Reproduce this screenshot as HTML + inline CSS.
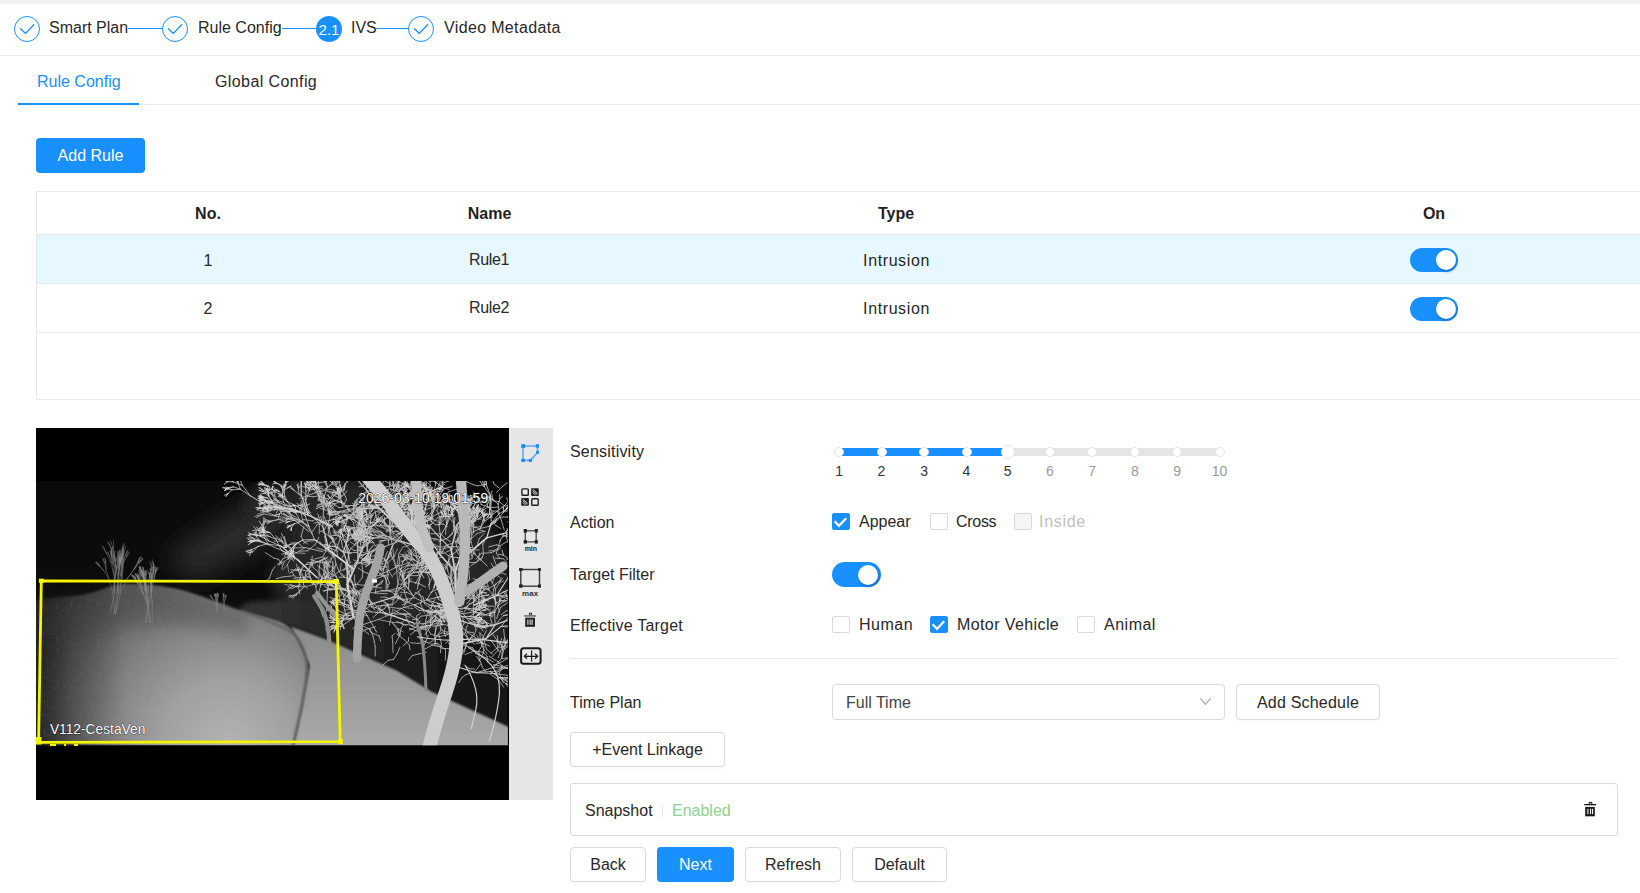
<!DOCTYPE html>
<html><head><meta charset="utf-8">
<style>
*{box-sizing:border-box;margin:0;padding:0}
html,body{width:1640px;height:893px;overflow:hidden;background:#fff;font-family:"Liberation Sans",sans-serif;font-size:16px;color:#333}
.a{position:absolute}
.t{position:absolute;line-height:18px;white-space:nowrap;font-size:16px;color:#282828}
.c{position:absolute;line-height:18px;white-space:nowrap;font-size:16px;color:#282828;transform:translateX(-50%)}
.sc{position:absolute;width:26px;height:26px;border:1px solid #1890ff;border-radius:50%}
.sl{position:absolute;height:1px;background:#1890ff;top:28px}
.btn{position:absolute;border:1px solid #d9d9d9;border-radius:4px;background:#fff;text-align:center;font-size:16px;color:#282828;box-shadow:0 2px 0 rgba(0,0,0,0.015)}
.sw{position:absolute;width:48px;height:24px;border-radius:12px;background:#1890ff}
.sw::after{content:"";position:absolute;right:2px;top:2px;width:20px;height:20px;border-radius:50%;background:#fff;box-shadow:1px 2px 3px rgba(0,40,90,0.3)}
.cb{position:absolute;width:18px;height:17px;border:1px solid #d9d9d9;border-radius:2px;background:#fff}
.cb.on{background:#1890ff;border-color:#1890ff}
.dot{position:absolute;width:10px;height:10px;border-radius:50%;background:#fff;border:1px solid #e4e4e4;top:447px}
.num{position:absolute;top:462px;line-height:18px;font-size:14px;transform:translateX(-50%)}
</style></head><body>
<!-- top bar -->
<div class="a" style="left:0;top:0;width:1640px;height:4px;background:#eef0f4"></div>

<!-- steps -->
<div class="sc" style="left:14px;top:16px"></div>
<div class="t" style="left:49px;top:19px">Smart Plan</div>
<div class="sl" style="left:128px;width:34px"></div>
<div class="sc" style="left:162px;top:16px"></div>
<div class="t" style="left:198px;top:19px">Rule Config</div>
<div class="sl" style="left:282px;width:34px"></div>
<div class="a" style="left:316px;top:16px;width:26px;height:26px;border-radius:50%;background:#1890ff;color:#fff;font-size:15px;line-height:28px;text-align:center">2.1</div>
<div class="t" style="left:351px;top:19px">IVS</div>
<div class="sl" style="left:376px;width:32px"></div>
<div class="sc" style="left:408px;top:16px"></div>
<div class="t" style="left:444px;top:19px;letter-spacing:0.35px">Video Metadata</div>

<div class="a" style="left:0;top:55px;width:1640px;height:1px;background:#e8e8e8"></div>

<!-- tabs -->
<div class="t" style="left:37px;top:73px;color:#1890ff">Rule Config</div>
<div class="t" style="left:215px;top:73px;letter-spacing:0.4px">Global Config</div>
<div class="a" style="left:18px;top:104px;width:1622px;height:1px;background:#e8e8e8"></div>
<div class="a" style="left:18px;top:103px;width:121px;height:2px;background:#1890ff"></div>

<!-- add rule -->
<div class="a" style="left:36px;top:138px;width:109px;height:35px;border-radius:4px;background:#1890ff;color:#fff;line-height:35px;text-align:center">Add Rule</div>

<!-- table -->
<div class="a" style="left:36px;top:191px;width:1610px;height:209px;border:1px solid #e8e8e8"></div>
<div class="a" style="left:37px;top:234px;width:1603px;height:50px;background:#e6f7ff;border-top:1px solid #e8e8e8;border-bottom:1px solid #e8e8e8"></div>
<div class="a" style="left:37px;top:332px;width:1603px;height:1px;background:#e8e8e8"></div>

<!-- table text -->
<div class="c" style="left:208px;top:205px;font-weight:bold;color:#1f1f1f">No.</div>
<div class="c" style="left:489.5px;top:205px;font-weight:bold;color:#1f1f1f">Name</div>
<div class="c" style="left:896px;top:205px;font-weight:bold;color:#1f1f1f">Type</div>
<div class="c" style="left:1434px;top:205px;font-weight:bold;color:#1f1f1f">On</div>
<div class="c" style="left:208px;top:252px">1</div>
<div class="c" style="left:489px;top:251px;letter-spacing:-0.4px">Rule1</div>
<div class="c" style="left:896.5px;top:252px;letter-spacing:0.6px">Intrusion</div>
<div class="sw" style="left:1410px;top:248px"></div>
<div class="c" style="left:208px;top:300px">2</div>
<div class="c" style="left:489px;top:299px;letter-spacing:-0.4px">Rule2</div>
<div class="c" style="left:896.5px;top:300px;letter-spacing:0.6px">Intrusion</div>
<div class="sw" style="left:1410px;top:297px"></div>

<!-- video -->
<div class="a" style="left:36px;top:428px;width:473px;height:372px;background:#000"></div>
<!--VIDEO--><svg class="a" style="left:36px;top:478px;width:474px;height:270px" viewBox="0 0 1568 893" preserveAspectRatio="none">
<defs>
<filter id="b8" filterUnits="userSpaceOnUse" x="-200" y="-200" width="2000" height="1300"><feGaussianBlur stdDeviation="8"/></filter>
<filter id="b20" filterUnits="userSpaceOnUse" x="-200" y="-200" width="2000" height="1300"><feGaussianBlur stdDeviation="22"/></filter>
<filter id="b40" filterUnits="userSpaceOnUse" x="-200" y="-200" width="2000" height="1300"><feGaussianBlur stdDeviation="40"/></filter>
<filter id="b3" filterUnits="userSpaceOnUse" x="-200" y="-200" width="2000" height="1300"><feGaussianBlur stdDeviation="3"/></filter>
<radialGradient id="ground" gradientUnits="userSpaceOnUse" cx="640" cy="893" r="760" fx="640" fy="893"><stop offset="0" stop-color="#b4b4b4"/><stop offset="0.3" stop-color="#a0a0a0"/><stop offset="0.55" stop-color="#828282"/><stop offset="0.72" stop-color="#686868"/><stop offset="0.9" stop-color="#4c4c4c"/><stop offset="1" stop-color="#3a3a3a"/></radialGradient>
<linearGradient id="gravel" gradientUnits="userSpaceOnUse" x1="0" y1="480" x2="0" y2="893"><stop offset="0" stop-color="#8a8a8a"/><stop offset="1" stop-color="#aaaaaa"/></linearGradient>
<linearGradient id="wallg" gradientUnits="userSpaceOnUse" x1="800" y1="0" x2="1568" y2="0"><stop offset="0" stop-color="#303030"/><stop offset="0.5" stop-color="#1e1e1e"/><stop offset="1" stop-color="#121212"/></linearGradient>
<linearGradient id="leftdark" x1="0" y1="0" x2="1" y2="0"><stop offset="0" stop-color="#101010" stop-opacity="0.7"/><stop offset="0.4" stop-color="#101010" stop-opacity="0.3"/><stop offset="1" stop-color="#101010" stop-opacity="0"/></linearGradient>
<filter id="noise" filterUnits="userSpaceOnUse" x="0" y="0" width="1568" height="893"><feTurbulence type="fractalNoise" baseFrequency="0.09" numOctaves="2" seed="4"/><feColorMatrix type="matrix" values="0 0 0 0 0.5  0 0 0 0 0.5  0 0 0 0 0.5  1.2 0 0 0 -0.6"/></filter>
<clipPath id="groundclip"><path d="M-20,407 Q77,392 124,390 Q170,387 220,368 Q269,350 300,350 Q331,350 386,355 Q440,360 479,370 Q518,381 570,399 Q622,417 648,428 Q674,438 734,454 Q794,469 818,480 Q842,491 861,526 Q880,560 892,590 Q905,620 892,690 L880,760 L850,893 L-20,893 Z"/></clipPath>
<clipPath id="vclip"><rect x="0" y="10" width="1561" height="874"/></clipPath>
</defs>
<g clip-path="url(#vclip)">
<rect x="0" y="0" width="1568" height="893" fill="#0b0b0b"/>
<path d="M430,260 Q600,130 860,10 L920,140 Q680,270 520,340 Z" fill="#2c2c2c" filter="url(#b40)"/>
<ellipse cx="760" cy="90" rx="70" ry="55" fill="#262626" filter="url(#b20)"/>
<path d="M840,0 Q1568,0 1568,350 Q1568,700 1484,670 Q1400,640 1300,605 Q1200,570 1100,535 Q1000,500 940,480 Q880,460 835,430 Q790,400 780,350 Q770,300 805,250 Q840,200 850,150 L860,100 Z" fill="#262626" filter="url(#b20)"/>
<path d="M660,440 L842,491 L971,538 L1193,637 L1311,708 L1568,825 L1568,560 L1300,500 L1050,430 L850,400 L700,410 Z" fill="url(#wallg)" filter="url(#b8)"/>
<path d="M-20,407 Q77,392 124,390 Q170,387 220,368 Q269,350 300,350 Q331,350 386,355 Q440,360 479,370 Q518,381 570,399 Q622,417 648,428 Q674,438 734,454 Q794,469 818,480 Q842,491 861,526 Q880,560 892,590 Q905,620 892,690 L880,760 L850,893 L-20,893 Z" fill="url(#ground)" filter="url(#b3)"/>
<rect x="0" y="300" width="300" height="600" fill="url(#leftdark)"/>
<path d="M-20,420 Q200,370 330,360 Q520,380 700,450 L700,520 Q450,470 250,500 Q100,520 -20,540 Z" fill="#3a3a3a" opacity="0.3" filter="url(#b20)"/>
<rect x="0" y="340" width="1568" height="560" filter="url(#noise)" clip-path="url(#groundclip)" opacity="0.22"/>
<path d="M842,491 L971,538 L1193,637 L1311,708 L1568,825 L1568,893 L850,893 L880,760 L905,620 L880,560 Z" fill="url(#gravel)" filter="url(#b3)"/>
<path d="M680,440 Q842,495 864,528 Q885,560 892,595 Q900,630 889,695 Q878,760 863,826 L848,893" fill="none" stroke="#5e5e5e" stroke-width="7" filter="url(#b3)"/>
<path d="M1050 460L1030 352M1390 420L1387 310" stroke="#d4d4d4" stroke-width="8.0" fill="none" stroke-linecap="round"/>
<path d="M1030 352L1065 272M1030 352L1030 283M1387 310L1373 235M1387 310L1336 253M1387 310L1414 232" stroke="#d4d4d4" stroke-width="5.5" fill="none" stroke-linecap="round"/>
<path d="M1065 272L1087 207M1065 272L1064 213M1030 283L1017 243M1030 283L1036 240M1373 235L1330 191M1373 235L1387 187M1373 235L1388 176M1336 253L1305 206M1336 253L1338 192M1414 232L1433 185M1414 232L1413 168M864 269L810 225M864 269L812 239M899 122L847 106M899 122L846 101M1524 389L1572 391M1524 389L1559 334M1524 389L1575 363M1488 532L1519 485M1488 532L1539 491" stroke="#d4d4d4" stroke-width="3.5" fill="none" stroke-linecap="round"/>
<path d="M1087 207L1078 159M1078 159L1078 128M1078 128L1073 110M1073 110L1071 96M1073 110L1060 103M1073 110L1065 98M1078 128L1077 108M1077 108L1088 96M1077 108L1068 97M1077 108L1085 96M1078 159L1061 124M1061 124L1036 108M1036 108L1013 112M1036 108L1024 91M1061 124L1071 94M1071 94L1087 86M1071 94L1088 85M1078 159L1054 139M1054 139L1032 132M1032 132L1020 125M1032 132L1022 121M1054 139L1035 127M1035 127L1023 122M1035 127L1019 120M1054 139L1033 133M1033 133L1019 126M1033 133L1019 139M1033 133L1019 123M1087 207L1088 166M1088 166L1095 137M1095 137L1094 119M1094 119L1085 109M1094 119L1085 109M1095 137L1103 117M1103 117L1105 104M1103 117L1113 106M1095 137L1094 119M1094 119L1088 107M1094 119L1091 108M1088 166L1080 136M1080 136L1079 112M1079 112L1088 98M1079 112L1066 97M1080 136L1071 116M1071 116L1059 103M1071 116L1066 102M1071 116L1059 109M1088 166L1074 137M1074 137L1058 126M1058 126L1048 118M1058 126L1047 115M1074 137L1077 115M1077 115L1079 99M1077 115L1090 105M1064 213L1094 182M1094 182L1106 151M1106 151L1108 132M1108 132L1107 118M1108 132L1116 121M1106 151L1125 139M1125 139L1143 135M1125 139L1141 131M1125 139L1144 139M1094 182L1114 160M1114 160L1129 144M1129 144L1138 135M1129 144L1133 127M1114 160L1126 146M1126 146L1140 143M1126 146L1130 133M1064 213L1078 176M1078 176L1069 148M1069 148L1076 127M1076 127L1072 111M1076 127L1081 110M1076 127L1086 113M1069 148L1081 127M1081 127L1095 121M1081 127L1093 119M1078 176L1081 146M1081 146L1071 127M1071 127L1064 113M1071 127L1066 110M1081 146L1101 131M1101 131L1114 123M1101 131L1114 124M1017 243L1028 211M1028 211L1036 191M1036 191L1052 185M1052 185L1060 178M1052 185L1065 185M1036 191L1033 174M1033 174L1037 165M1033 174L1031 162M1033 174L1028 163M1036 191L1032 178M1032 178L1024 173M1032 178L1030 166M1028 211L1047 198M1047 198L1064 199M1064 199L1074 190M1064 199L1075 198M1064 199L1076 200M1047 198L1053 180M1053 180L1047 166M1053 180L1048 167M1017 243L993 228M993 228L975 226M975 226L964 232M964 232L956 233M975 226L964 229M964 229L958 236M964 229L955 229M975 226L963 221M963 221L953 221M963 221L952 222M993 228L984 212M984 212L977 200M977 200L971 191M977 200L969 193M984 212L980 200M980 200L976 191M980 200L977 191M980 200L974 192M1017 243L1028 213M1028 213L1034 189M1034 189L1037 174M1037 174L1045 166M1037 174L1045 164M1037 174L1033 162M1034 189L1033 174M1033 174L1026 167M1033 174L1026 165M1028 213L1031 189M1031 189L1038 172M1038 172L1046 166M1038 172L1049 164M1038 172L1035 159M1031 189L1022 175M1022 175L1014 169M1022 175L1021 164M1036 240L1057 218M1057 218L1077 204M1077 204L1091 194M1091 194L1102 195M1091 194L1104 192M1077 204L1095 205M1095 205L1106 210M1095 205L1104 210M1077 204L1097 202M1097 202L1106 194M1097 202L1108 201M1057 218L1064 197M1064 197L1069 180M1069 180L1069 168M1069 180L1070 167M1064 197L1062 181M1062 181L1066 169M1062 181L1058 171M1064 197L1068 181M1068 181L1075 174M1068 181L1066 171M1036 240L1022 212M1022 212L1007 194M1007 194L992 190M992 190L984 182M992 190L980 190M1007 194L992 184M992 184L983 177M992 184L985 172M1007 194L1008 176M1008 176L1010 165M1008 176L1017 167M1022 212L1015 192M1015 192L1011 177M1011 177L1017 168M1011 177L1007 169M1011 177L1011 168M1015 192L1008 180M1008 180L1002 172M1008 180L999 176M1008 180L1005 170M1330 191L1300 160M1300 160L1278 147M1278 147L1264 135M1264 135L1255 124M1264 135L1250 130M1278 147L1263 132M1263 132L1263 116M1263 132L1250 129M1278 147L1260 143M1260 143L1248 142M1260 143L1248 144M1300 160L1272 157M1272 157L1259 145M1259 145L1256 131M1259 145L1253 135M1259 145L1247 138M1272 157L1255 149M1255 149L1240 149M1255 149L1242 149M1255 149L1250 137M1330 191L1305 161M1305 161L1282 149M1282 149L1263 154M1263 154L1252 148M1263 154L1256 164M1282 149L1266 135M1266 135L1264 122M1266 135L1250 130M1266 135L1255 123M1282 149L1264 140M1264 140L1249 143M1264 140L1254 129M1305 161L1283 149M1283 149L1270 137M1270 137L1257 136M1270 137L1264 124M1283 149L1263 147M1263 147L1251 155M1263 147L1250 140M1283 149L1267 152M1267 152L1255 157M1267 152L1256 146M1387 187L1382 149M1382 149L1378 123M1378 123L1374 106M1374 106L1371 93M1374 106L1375 94M1378 123L1377 103M1377 103L1371 91M1377 103L1382 93M1378 123L1367 105M1367 105L1353 101M1367 105L1354 98M1367 105L1364 90M1382 149L1364 128M1364 128L1347 121M1347 121L1338 114M1347 121L1338 111M1364 128L1364 107M1364 107L1371 94M1364 107L1359 91M1387 187L1404 159M1404 159L1424 144M1424 144L1437 133M1437 133L1445 122M1437 133L1446 123M1437 133L1446 122M1424 144L1440 144M1440 144L1449 152M1440 144L1453 143M1440 144L1452 141M1404 159L1418 137M1418 137L1414 119M1414 119L1416 108M1414 119L1417 108M1414 119L1413 106M1418 137L1424 119M1424 119L1435 107M1424 119L1430 105M1424 119L1424 105M1388 176L1402 137M1402 137L1394 106M1394 106L1399 87M1399 87L1404 75M1399 87L1406 75M1394 106L1401 87M1401 87L1412 75M1401 87L1399 75M1402 137L1418 110M1418 110L1427 87M1427 87L1427 68M1427 87L1432 73M1427 87L1430 71M1418 110L1414 85M1414 85L1416 69M1414 85L1411 67M1418 110L1442 102M1442 102L1462 97M1442 102L1451 87M1402 137L1414 107M1414 107L1422 87M1422 87L1436 77M1422 87L1436 79M1422 87L1432 74M1414 107L1428 88M1428 88L1435 71M1428 88L1434 74M1414 107L1419 86M1419 86L1431 74M1419 86L1432 78M1419 86L1413 73M1388 176L1413 140M1413 140L1410 107M1410 107L1423 84M1423 84L1431 65M1423 84L1432 66M1423 84L1431 67M1410 107L1397 88M1397 88L1384 74M1397 88L1398 70M1397 88L1379 83M1413 140L1434 109M1434 109L1431 83M1431 83L1439 69M1431 83L1437 68M1434 109L1437 85M1437 85L1431 70M1437 85L1449 72M1413 140L1442 118M1442 118L1463 110M1463 110L1471 99M1463 110L1473 101M1442 118L1457 103M1457 103L1463 89M1457 103L1463 88M1457 103L1470 95M1305 206L1271 180M1271 180L1253 161M1253 161L1233 157M1233 157L1220 156M1233 157L1218 163M1253 161L1244 142M1244 142L1242 129M1244 142L1240 126M1271 180L1251 151M1251 151L1256 126M1256 126L1270 114M1256 126L1250 108M1256 126L1257 109M1251 151L1232 135M1232 135L1230 115M1232 135L1217 132M1232 135L1222 122M1271 180L1236 177M1236 177L1213 188M1213 188L1196 182M1213 188L1199 197M1213 188L1206 204M1236 177L1219 162M1219 162L1217 146M1219 162L1202 161M1219 162L1215 149M1236 177L1208 181M1208 181L1189 175M1208 181L1191 187M1208 181L1192 195M1305 206L1300 167M1300 167L1293 142M1293 142L1279 131M1279 131L1274 120M1279 131L1277 118M1293 142L1275 131M1275 131L1265 124M1275 131L1259 133M1293 142L1282 125M1282 125L1282 109M1282 125L1270 115M1300 167L1284 147M1284 147L1266 144M1266 144L1253 148M1266 144L1254 150M1284 147L1276 131M1276 131L1275 118M1276 131L1275 119M1276 131L1277 119M1338 192L1333 155M1333 155L1339 132M1339 132L1343 117M1343 117L1343 108M1343 117L1349 110M1343 117L1339 106M1339 132L1351 119M1351 119L1362 118M1351 119L1354 109M1351 119L1353 107M1333 155L1347 129M1347 129L1352 109M1352 109L1358 96M1352 109L1355 95M1347 129L1368 121M1368 121L1382 125M1368 121L1383 120M1338 192L1359 154M1359 154L1371 124M1371 124L1380 104M1380 104L1396 96M1380 104L1389 88M1371 124L1383 100M1383 100L1400 90M1383 100L1398 92M1359 154L1354 120M1354 120L1349 99M1349 99L1349 83M1349 99L1343 86M1354 120L1342 98M1342 98L1339 80M1342 98L1328 90M1342 98L1336 80M1433 185L1433 152M1433 152L1435 132M1435 132L1432 115M1432 115L1439 106M1432 115L1435 104M1435 132L1429 120M1429 120L1430 110M1429 120L1431 112M1435 132L1439 119M1439 119L1437 110M1439 119L1440 108M1439 119L1444 108M1433 152L1449 133M1449 133L1451 117M1451 117L1445 107M1451 117L1459 111M1451 117L1445 108M1449 133L1452 114M1452 114L1448 99M1452 114L1446 100M1433 185L1469 167M1469 167L1484 143M1484 143L1503 130M1503 130L1512 116M1503 130L1506 114M1484 143L1479 123M1479 123L1475 108M1479 123L1471 112M1469 167L1478 143M1478 143L1484 126M1484 126L1481 116M1484 126L1496 120M1484 126L1493 116M1478 143L1494 129M1494 129L1503 116M1494 129L1500 117M1494 129L1509 130M1478 143L1482 124M1482 124L1487 108M1482 124L1492 116M1469 167L1498 160M1498 160L1519 148M1519 148L1532 133M1519 148L1525 134M1498 160L1514 148M1514 148L1524 135M1514 148L1523 138M1433 185L1443 149M1443 149L1465 134M1465 134L1481 125M1481 125L1492 120M1481 125L1495 120M1465 134L1477 122M1477 122L1481 112M1477 122L1490 120M1443 149L1458 126M1458 126L1455 106M1455 106L1445 96M1455 106L1448 95M1458 126L1460 104M1460 104L1464 88M1460 104L1458 89M1460 104L1464 91M1443 149L1460 130M1460 130L1461 113M1461 113L1466 100M1461 113L1463 100M1460 130L1465 113M1465 113L1473 103M1465 113L1470 100M1460 130L1474 117M1474 117L1477 103M1474 117L1482 104M1413 168L1424 130M1424 130L1430 102M1430 102L1438 80M1438 80L1441 67M1438 80L1440 65M1430 102L1432 80M1432 80L1443 66M1432 80L1423 69M1432 80L1440 69M1424 130L1410 102M1410 102L1393 86M1393 86L1379 82M1393 86L1377 83M1410 102L1392 84M1392 84L1379 75M1392 84L1375 83M1410 102L1387 94M1387 94L1373 88M1387 94L1372 87M1413 168L1404 125M1404 125L1388 102M1388 102L1377 86M1377 86L1368 73M1377 86L1365 79M1388 102L1367 97M1367 97L1352 95M1367 97L1355 89M1367 97L1358 87M1404 125L1386 95M1386 95L1367 74M1367 74L1367 57M1367 74L1367 52M1367 74L1358 58M1386 95L1379 75M1379 75L1378 61M1379 75L1374 59M1379 75L1368 69M1386 95L1370 79M1370 79L1353 75M1370 79L1355 70M1370 79L1367 62M1245 157L1241 102M1241 102L1230 71M1230 71L1221 50M1221 50L1212 40M1212 40L1212 30M1212 40L1203 37M1221 50L1224 36M1224 36L1225 27M1224 36L1219 27M1221 50L1219 36M1219 36L1211 28M1219 36L1217 27M1219 36L1218 26M1230 71L1237 49M1237 49L1249 40M1249 40L1259 40M1249 40L1258 36M1237 49L1250 42M1250 42L1260 42M1250 42L1258 34M1237 49L1250 43M1250 43L1258 38M1250 43L1260 36M1241 102L1258 71M1258 71L1275 50M1275 50L1272 33M1272 33L1273 22M1272 33L1278 22M1275 50L1292 41M1292 41L1300 28M1292 41L1306 42M1292 41L1297 31M1258 71L1282 56M1282 56L1299 51M1299 51L1306 40M1299 51L1312 54M1282 56L1303 47M1303 47L1318 42M1303 47L1317 41M1303 47L1312 31M1258 71L1269 49M1269 49L1282 41M1282 41L1285 31M1282 41L1286 32M1269 49L1269 34M1269 34L1269 25M1269 34L1264 26M1241 102L1216 68M1216 68L1198 38M1198 38L1182 16M1182 16L1180 -7M1182 16L1176 -0M1198 38L1200 12M1200 12L1210 -3M1200 12L1204 -6M1216 68L1199 47M1199 47L1183 40M1183 40L1171 34M1183 40L1172 39M1199 47L1184 34M1184 34L1181 19M1184 34L1179 20M1245 157L1199 124M1199 124L1168 95M1168 95L1138 89M1138 89L1119 98M1119 98L1109 111M1119 98L1106 98M1138 89L1119 94M1119 94L1110 107M1119 94L1105 102M1138 89L1115 90M1115 90L1100 89M1115 90L1100 96M1168 95L1155 72M1155 72L1156 51M1156 51L1162 37M1156 51L1168 40M1156 51L1163 39M1155 72L1156 55M1156 55L1160 44M1156 55L1157 43M1155 72L1144 59M1144 59L1144 48M1144 59L1131 53M1144 59L1138 48M1168 95L1144 74M1144 74L1137 50M1137 50L1125 39M1137 50L1137 33M1137 50L1123 37M1144 74L1132 53M1132 53L1118 44M1132 53L1120 40M1144 74L1130 61M1130 61L1115 57M1130 61L1119 56M1199 124L1161 113M1161 113L1133 100M1133 100L1113 93M1113 93L1099 93M1113 93L1104 81M1113 93L1099 92M1133 100L1120 82M1120 82L1119 66M1120 82L1118 65M1120 82L1118 64M1161 113L1146 85M1146 85L1136 64M1136 64L1132 50M1136 64L1135 48M1146 85L1141 61M1141 61L1135 45M1141 61L1132 48M1146 85L1127 76M1127 76L1113 69M1127 76L1119 64M1245 157L1242 109M1242 109L1220 88M1220 88L1219 64M1219 64L1222 49M1222 49L1229 39M1222 49L1225 40M1219 64L1222 48M1222 48L1218 38M1222 48L1228 38M1222 48L1217 39M1220 88L1201 79M1201 79L1191 71M1191 71L1185 62M1191 71L1186 64M1201 79L1192 66M1192 66L1189 58M1192 66L1189 57M1242 109L1257 78M1257 78L1272 57M1272 57L1289 51M1289 51L1295 39M1289 51L1304 52M1272 57L1286 53M1286 53L1296 49M1286 53L1295 49M1286 53L1296 57M1257 78L1265 52M1265 52L1281 44M1281 44L1291 43M1281 44L1294 41M1265 52L1271 35M1271 35L1273 24M1271 35L1283 29M1265 52L1259 33M1259 33L1254 20M1259 33L1263 18M1242 109L1247 80M1247 80L1255 63M1255 63L1255 51M1255 51L1258 42M1255 51L1253 43M1255 63L1261 52M1261 52L1267 46M1255 63L1261 52M1261 52L1266 43M1261 52L1267 44M1247 80L1259 65M1259 65L1261 50M1261 50L1269 42M1261 50L1265 41M1259 65L1263 51M1263 51L1259 41M1263 51L1259 40M1273 160L1305 132M1305 132L1319 100M1319 100L1335 82M1335 82L1345 71M1345 71L1356 68M1345 71L1354 63M1345 71L1351 64M1335 82L1348 71M1348 71L1352 59M1348 71L1359 70M1319 100L1311 74M1311 74L1304 59M1304 59L1298 47M1304 59L1302 49M1311 74L1321 56M1321 56L1334 48M1321 56L1329 45M1319 100L1332 83M1332 83L1347 77M1347 77L1356 74M1347 77L1356 74M1332 83L1336 70M1336 70L1336 60M1336 70L1339 62M1305 132L1317 102M1317 102L1315 78M1315 78L1325 64M1325 64L1334 60M1325 64L1325 51M1315 78L1318 64M1318 64L1328 58M1318 64L1315 52M1318 64L1323 54M1317 102L1310 76M1310 76L1307 58M1307 58L1304 43M1307 58L1306 46M1310 76L1306 58M1306 58L1308 44M1306 58L1300 46M1317 102L1319 81M1319 81L1312 70M1312 70L1311 61M1312 70L1309 62M1312 70L1311 61M1319 81L1313 67M1313 67L1310 57M1313 67L1315 56M1273 160L1288 106M1288 106L1268 72M1268 72L1244 49M1244 49L1233 30M1233 30L1234 17M1233 30L1221 18M1233 30L1219 20M1244 49L1230 30M1230 30L1229 13M1230 30L1217 23M1244 49L1238 29M1238 29L1241 12M1238 29L1226 21M1268 72L1245 62M1245 62L1229 62M1229 62L1218 58M1229 62L1217 66M1245 62L1231 65M1231 65L1221 72M1231 65L1224 71M1231 65L1221 63M1245 62L1229 56M1229 56L1220 48M1229 56L1218 52M1229 56L1220 48M1288 106L1292 73M1292 73L1305 55M1305 55L1304 40M1304 40L1308 30M1304 40L1301 28M1304 40L1296 33M1305 55L1320 53M1320 53L1331 56M1320 53L1331 56M1292 73L1295 51M1295 51L1292 34M1292 34L1289 22M1292 34L1282 25M1295 51L1289 37M1289 37L1284 28M1289 37L1286 28M1288 106L1295 68M1295 68L1291 44M1291 44L1286 27M1286 27L1281 16M1286 27L1291 17M1286 27L1285 13M1291 44L1283 27M1283 27L1281 15M1283 27L1279 14M1283 27L1274 17M1295 68L1314 49M1314 49L1334 44M1334 44L1346 43M1334 44L1342 35M1314 49L1334 38M1334 38L1349 39M1334 38L1346 28M1334 38L1346 25M1295 68L1310 42M1310 42L1329 35M1329 35L1341 29M1329 35L1345 28M1329 35L1343 35M1310 42L1327 36M1327 36L1342 34M1327 36L1340 29M1202 208L1153 190M1153 190L1114 189M1114 189L1089 181M1089 181L1070 190M1070 190L1060 203M1070 190L1056 184M1089 181L1074 175M1074 175L1062 178M1074 175L1063 174M1074 175L1062 170M1114 189L1092 172M1092 172L1073 168M1073 168L1058 172M1073 168L1060 160M1092 172L1077 158M1077 158L1065 147M1077 158L1065 153M1092 172L1085 153M1085 153L1083 139M1085 153L1076 143M1114 189L1086 178M1086 178L1068 182M1068 182L1054 185M1068 182L1059 189M1068 182L1055 187M1086 178L1072 166M1072 166L1065 155M1072 166L1059 166M1153 190L1115 200M1115 200L1085 196M1085 196L1061 193M1061 193L1046 193M1061 193L1049 182M1085 196L1071 181M1071 181L1056 176M1071 181L1060 174M1115 200L1086 192M1086 192L1068 201M1068 201L1054 205M1068 201L1056 206M1086 192L1063 186M1063 186L1046 190M1063 186L1050 174M1115 200L1098 219M1098 219L1080 231M1080 231L1066 232M1080 231L1071 242M1080 231L1068 228M1098 219L1096 238M1096 238L1103 248M1096 238L1090 250M1096 238L1104 249M1202 208L1157 226M1157 226L1134 252M1134 252L1127 274M1127 274L1121 290M1121 290L1114 303M1121 290L1118 302M1127 274L1123 289M1123 289L1120 301M1123 289L1125 299M1134 252L1128 277M1128 277L1133 295M1133 295L1134 309M1133 295L1129 309M1133 295L1143 307M1128 277L1137 296M1137 296L1151 305M1137 296L1142 307M1134 252L1121 276M1121 276L1115 296M1115 296L1105 308M1115 296L1105 307M1121 276L1103 284M1103 284L1089 280M1103 284L1091 293M1103 284L1090 293M1157 226L1124 233M1124 233L1102 248M1102 248L1091 264M1091 264L1076 272M1091 264L1078 272M1102 248L1096 267M1096 267L1099 280M1096 267L1084 274M1124 233L1102 247M1102 247L1091 259M1091 259L1085 269M1091 259L1082 268M1102 247L1093 265M1093 265L1096 278M1093 265L1091 280M1093 265L1088 278M1102 247L1082 255M1082 255L1068 258M1082 255L1067 248M1082 255L1075 266M1124 233L1108 252M1108 252L1102 268M1102 268L1099 282M1102 268L1101 279M1102 268L1104 280M1108 252L1105 267M1105 267L1105 277M1105 267L1098 273M1079 101L1048 120M1048 120L1031 136M1031 136L1026 150M1026 150L1021 159M1021 159L1020 168M1026 150L1022 160M1022 160L1019 168M1022 160L1015 164M1031 136L1021 146M1021 146L1012 148M1021 146L1016 153M1021 146L1012 149M1031 136L1016 140M1016 140L1005 144M1005 144L996 141M1005 144L995 145M1016 140L1006 146M1006 146L998 150M1048 120L1021 122M1021 122L1007 134M1007 134L996 145M996 145L995 155M996 145L984 145M996 145L990 151M1007 134L999 147M999 147L999 159M999 147L993 155M999 147L996 158M1021 122L1004 132M1004 132L998 145M998 145L996 155M998 145L998 153M998 145L992 153M1004 132L994 141M994 141L993 150M994 141L992 150M1004 132L989 137M989 137L980 138M989 137L979 139M1079 101L1036 103M1036 103L1011 80M1011 80L989 74M989 74L973 83M973 83L960 82M973 83L966 95M989 74L972 65M972 65L966 55M972 65L958 69M972 65L963 56M989 74L973 84M973 84L968 94M973 84L959 85M1011 80L1006 57M1006 57L1010 39M1010 39L1018 26M1010 39L1006 24M1010 39L1006 24M1006 57L1003 40M1003 40L999 29M1003 40L1006 31M1006 57L1000 43M1000 43L996 32M1000 43L994 35M1011 80L1001 60M1001 60L999 46M999 46L999 35M999 46L1002 36M1001 60L997 44M997 44L997 33M997 44L1000 32M1036 103L1008 110M1008 110L993 121M993 121L980 122M980 122L970 123M980 122L971 122M993 121L980 120M980 120L971 119M980 120L970 119M1008 110L990 112M990 112L974 113M974 113L964 117M974 113L964 109M990 112L979 109M979 109L972 104M979 109L974 102M979 109L970 112M990 112L978 115M978 115L969 118M978 115L968 117M1095 42L1058 3M1058 3L1020 -10M1020 -10L1005 -31M1005 -31L991 -39M991 -39L982 -43M991 -39L982 -46M991 -39L982 -37M1005 -31L993 -47M993 -47L980 -57M993 -47L978 -55M1005 -31L988 -41M988 -41L982 -51M988 -41L973 -41M988 -41L976 -44M1020 -10L999 -35M999 -35L975 -46M975 -46L968 -60M975 -46L956 -53M999 -35L983 -51M983 -51L968 -52M983 -51L976 -66M1058 3L1048 -28M1048 -28L1058 -52M1058 -52L1062 -68M1062 -68L1070 -77M1062 -68L1061 -78M1062 -68L1057 -78M1058 -52L1062 -73M1062 -73L1061 -90M1062 -73L1068 -87M1048 -28L1029 -38M1029 -38L1017 -51M1017 -51L1013 -62M1017 -51L1006 -58M1017 -51L1008 -62M1029 -38L1024 -50M1024 -50L1017 -58M1024 -50L1026 -59M1095 42L1066 7M1066 7L1037 -10M1037 -10L1013 -18M1013 -18L997 -18M997 -18L987 -23M997 -18L987 -26M997 -18L986 -19M1013 -18L1002 -32M1002 -32L994 -40M1002 -32L992 -38M1002 -32L1000 -45M1037 -10L1028 -33M1028 -33L1029 -51M1029 -51L1036 -61M1029 -51L1038 -63M1028 -33L1035 -50M1035 -50L1043 -59M1035 -50L1043 -62M1035 -50L1041 -62M1028 -33L1018 -45M1018 -45L1015 -55M1018 -45L1016 -56M1018 -45L1017 -57M1037 -10L1014 -4M1014 -4L1004 11M1004 11L1005 24M1004 11L993 20M1014 -4L1000 6M1000 6L996 15M1000 6L991 15M1066 7L1040 -18M1040 -18L1015 -21M1015 -21L998 -31M998 -31L986 -28M998 -31L985 -38M998 -31L987 -40M1015 -21L997 -30M997 -30L984 -29M997 -30L992 -43M1015 -21L1000 -12M1000 -12L993 -5M1000 -12L990 -3M1040 -18L1013 -18M1013 -18L998 -7M998 -7L987 -3M998 -7L992 2M1013 -18L998 -24M998 -24L987 -30M998 -24L987 -24M998 -24L988 -32M1040 -18L1030 -45M1030 -45L1024 -68M1024 -68L1026 -82M1024 -68L1012 -77M1030 -45L1019 -61M1019 -61L1021 -74M1019 -61L1018 -73M1030 -45L1023 -67M1023 -67L1020 -83M1023 -67L1020 -80M921 203L882 205M882 205L861 218M861 218L852 234M852 234L845 246M845 246L839 254M845 246L841 256M852 234L851 246M851 246L847 252M861 218L842 219M842 219L829 223M829 223L820 226M829 223L822 230M829 223L819 223M842 219L830 228M830 228L820 230M830 228L821 230M830 228L820 229M882 205L856 221M856 221L850 242M850 242L840 251M840 251L838 261M840 251L830 252M850 242L853 257M853 257L856 266M853 257L856 269M850 242L843 257M843 257L832 262M843 257L833 263M856 221L841 239M841 239L826 250M826 250L813 252M826 250L822 262M841 239L842 257M842 257L836 269M842 257L850 268M842 257L834 268M856 221L845 236M845 236L844 249M844 249L837 255M844 249L837 254M844 249L845 257M845 236L845 250M845 250L853 259M845 250L852 260M845 236L835 243M835 243L830 251M835 243L826 246M921 203L903 160M903 160L873 140M873 140L860 116M860 116L858 97M858 97L849 89M858 97L852 87M860 116L845 109M845 109L833 109M845 109L834 110M873 140L847 131M847 131L830 125M830 125L818 115M830 125L820 118M847 131L839 114M839 114L828 105M839 114L838 101M903 160L891 126M891 126L889 103M889 103L875 91M875 91L863 84M875 91L862 92M889 103L895 90M895 90L905 86M895 90L892 79M891 126L874 113M874 113L873 100M873 100L866 94M873 100L878 90M874 113L861 112M861 112L852 109M861 112L852 114M903 160L875 145M875 145L854 140M854 140L837 135M837 135L827 139M837 135L826 133M854 140L837 144M837 144L827 143M837 144L826 150M837 144L826 148M875 145L854 152M854 152L842 159M842 159L831 164M842 159L832 158M854 152L839 157M839 157L830 163M839 157L833 166M854 152L845 164M845 164L844 174M845 164L844 174M845 164L843 174M949 161L903 116M903 116L861 109M861 109L835 112M835 112L817 104M817 104L804 106M817 104L802 99M817 104L802 101M835 112L820 102M820 102L808 105M820 102L810 94M820 102L807 99M861 109L831 101M831 101L805 98M805 98L789 88M805 98L789 102M831 101L808 94M808 94L791 101M808 94L794 82M903 116L859 91M859 91L825 90M825 90L801 80M801 80L788 69M801 80L791 65M801 80L784 80M825 90L803 98M803 98L789 95M803 98L795 116M803 98L788 107M859 91L830 78M830 78L816 65M816 65L807 52M816 65L805 58M816 65L801 61M830 78L816 60M816 60L802 56M816 60L803 52M859 91L824 98M824 98L801 97M801 97L788 96M801 97L785 95M824 98L806 119M806 119L790 125M806 119L784 124M806 119L801 135M903 116L892 74M892 74L893 46M893 46L907 31M907 31L920 22M907 31L917 22M907 31L923 26M893 46L892 28M892 28L889 15M892 28L894 14M892 74L904 42M904 42L898 15M898 15L898 -5M898 15L889 -3M904 42L908 15M908 15L925 1M908 15L918 -4M904 42L928 30M928 30L947 29M928 30L949 37M892 74L870 54M870 54L868 34M868 34L863 22M868 34L878 22M868 34L867 19M870 54L854 41M854 41L843 28M854 41L841 33M949 161L951 104M951 104L972 77M972 77L994 75M994 75L1010 81M1010 81L1022 84M1010 81L1015 93M994 75L1005 66M1005 66L1008 57M1005 66L1007 56M1005 66L1012 57M972 77L987 57M987 57L1003 49M1003 49L1012 39M1003 49L1010 38M987 57L999 41M999 41L1006 32M999 41L1002 27M951 104L938 64M938 64L921 39M921 39L905 21M905 21L890 20M905 21L898 9M921 39L899 33M899 33L882 28M899 33L889 19M938 64L925 35M925 35L909 18M909 18L895 12M909 18L901 6M925 35L924 10M924 10L926 -10M924 10L920 -10M938 64L928 35M928 35L926 16M926 16L923 2M926 16L924 3M928 35L918 16M918 16L913 1M918 16L906 3M951 104L954 60M954 60L934 33M934 33L923 14M923 14L911 2M923 14L925 -3M923 14L910 9M934 33L934 5M934 5L945 -13M934 5L939 -12M954 60L964 30M964 30L954 10M954 10L948 -3M954 10L942 -2M954 10L954 -5M964 30L959 12M959 12L950 5M959 12L963 0M810 225L765 218M765 218L735 226M735 226L717 244M717 244L701 246M717 244L701 248M735 226L713 237M713 237L707 256M713 237L694 242M713 237L697 244M765 218L738 206M738 206L716 198M716 198L698 199M716 198L703 190M738 206L716 211M716 211L701 210M716 211L702 203M716 211L702 221M738 206L719 209M719 209L707 214M719 209L708 201M810 225L770 208M770 208L750 179M750 179L748 157M748 157L754 144M748 157L738 142M750 179L730 172M730 172L720 161M730 172L716 174M750 179L754 152M754 152L754 130M754 152L761 137M770 208L743 192M743 192L719 187M719 187L704 187M719 187L702 181M719 187L701 190M743 192L737 173M737 173L742 162M737 173L730 162M812 239L794 203M794 203L771 193M771 193L753 189M753 189L741 191M753 189L741 187M753 189L740 190M771 193L756 180M756 180L749 168M756 180L743 180M756 180L743 169M794 203L774 181M774 181L753 173M753 173L743 163M753 173L739 166M774 181L750 179M750 179L734 186M750 179L735 168M774 181L756 174M756 174L748 163M756 174L744 173M812 239L770 221M770 221L743 211M743 211L723 206M723 206L711 212M723 206L715 196M743 211L729 193M729 193L722 180M729 193L729 176M729 193L726 178M743 211L723 206M723 206L709 207M723 206L709 209M770 221L755 197M755 197L735 190M735 190L719 185M735 190L720 189M755 197L754 175M754 175L747 161M754 175L753 161M754 175L759 162M847 106L810 95M810 95L780 98M780 98L761 100M761 100L751 104M751 104L744 109M761 100L749 102M749 102L741 100M780 98L758 100M758 100L742 100M742 100L732 99M742 100L731 103M758 100L741 97M741 97L727 98M741 97L732 104M810 95L782 81M782 81L760 74M760 74L748 62M748 62L737 58M748 62L742 53M760 74L745 67M745 67L736 68M745 67L734 66M760 74L747 66M747 66L737 61M747 66L740 58M747 66L740 58M782 81L762 78M762 78L750 74M750 74L741 74M750 74L742 69M750 74L740 77M762 78L750 67M750 67L744 57M750 67L740 63M847 106L814 99M814 99L788 105M788 105L773 97M773 97L760 96M760 96L752 101M760 96L752 102M760 96L753 90M773 97L768 85M768 85L766 76M768 85L768 76M773 97L762 94M762 94L754 96M788 105L770 108M770 108L758 111M758 111L749 106M758 111L749 112M758 111L751 106M770 108L759 101M759 101L754 93M759 101L750 102M770 108L758 103M758 103L751 99M758 103L751 99M814 99L793 94M793 94L783 83M783 83L772 83M783 83L780 73M783 83L772 81M772 81L764 82M793 94L777 94M777 94L767 93M777 94L769 101M769 101L761 102M769 101L762 106M793 94L780 101M780 101L775 110M780 101L771 109M771 109L763 109M771 109L763 110M780 101L768 103M768 103L763 111M768 103L760 106M847 106L819 81M819 81L815 56M815 56L821 40M821 40L824 29M824 29L823 20M824 29L829 22M821 40L833 32M833 32L843 27M833 32L843 27M815 56L805 45M805 45L794 42M794 42L785 40M794 42L786 45M805 45L798 38M805 45L796 40M796 40L788 40M796 40L788 40M815 56L816 40M816 40L817 29M817 29L820 21M816 40L812 30M812 30L806 23M812 30L811 22M819 81L790 72M790 72L780 53M780 53L781 37M781 37L783 27M781 37L782 28M781 37L786 28M780 53L765 43M765 43L755 40M765 43L755 35M790 72L773 79M773 79L768 92M768 92L770 101M768 92L767 101M768 92L760 97M773 79L762 77M762 77L753 79M762 77L756 70M846 101L803 100M803 100L781 77M781 77L762 76M762 76L749 84M749 84L740 90M749 84L739 91M762 76L748 72M748 72L739 72M748 72L739 70M781 77L769 59M769 59L758 51M758 51L746 52M758 51L750 42M769 59L766 44M766 44L765 34M766 44L763 34M766 44L760 34M769 59L769 44M769 44L771 33M769 44L772 35M781 77L770 57M770 57L770 43M770 43L773 35M770 43L777 37M770 57L767 39M767 39L765 28M767 39L755 30M803 100L780 83M780 83L762 82M762 82L747 84M747 84L739 87M747 84L737 83M762 82L747 80M747 80L737 85M747 80L738 72M780 83L766 66M766 66L751 63M751 63L740 65M751 63L744 57M751 63L742 66M766 66L749 62M749 62L737 67M749 62L736 61M846 101L823 62M823 62L820 33M820 33L805 21M805 21L794 15M794 15L787 9M805 21L791 17M791 17L783 20M791 17L784 8M791 17L787 7M820 33L826 13M826 13L824 -0M824 -0L819 -7M824 -0L826 -9M826 13L836 3M836 3L840 -6M836 3L844 -0M826 13L821 -2M821 -2L812 -10M821 -2L815 -11M820 33L828 15M828 15L835 2M835 2L833 -9M835 2L838 -10M835 2L840 -9M828 15L839 8M839 8L848 4M839 8L847 5M823 62L791 46M791 46L766 50M766 50L750 45M750 45L737 41M750 45L740 40M766 50L750 40M750 40L737 32M750 40L741 31M791 46L770 28M770 28L752 21M752 21L743 14M752 21L745 9M770 28L750 23M750 23L739 15M750 23L736 17M750 23L734 22M770 28L752 19M752 19L738 23M752 19L737 23M752 19L741 8M1548 183L1584 175M1584 175L1610 180M1610 180L1628 175M1628 175L1635 161M1628 175L1637 165M1610 180L1630 178M1630 178L1643 184M1630 178L1643 176M1630 178L1641 184M1584 175L1606 161M1606 161L1618 149M1618 149L1627 138M1618 149L1628 143M1618 149L1621 135M1606 161L1618 145M1618 145L1634 138M1618 145L1622 130M1606 161L1622 158M1622 158L1634 155M1622 158L1634 160M1548 183L1594 193M1594 193L1621 204M1621 204L1641 202M1641 202L1653 210M1641 202L1651 211M1621 204L1640 202M1640 202L1652 192M1640 202L1652 204M1594 193L1616 212M1616 212L1622 228M1622 228L1633 235M1622 228L1630 237M1616 212L1634 220M1634 220L1647 228M1634 220L1647 226M1506 149L1533 130M1533 130L1546 114M1546 114L1547 102M1547 102L1542 95M1547 102L1545 94M1546 114L1556 104M1556 104L1562 96M1556 104L1565 97M1556 104L1562 98M1546 114L1555 105M1555 105L1560 99M1555 105L1558 97M1533 130L1559 129M1559 129L1574 127M1574 127L1582 119M1574 127L1585 126M1559 129L1577 119M1577 119L1588 107M1577 119L1588 107M1506 149L1532 118M1532 118L1557 104M1557 104L1570 89M1570 89L1571 75M1570 89L1585 82M1570 89L1575 76M1557 104L1564 82M1564 82L1557 65M1564 82L1574 71M1532 118L1529 87M1529 87L1511 70M1511 70L1495 62M1511 70L1508 54M1529 87L1535 68M1535 68L1533 55M1535 68L1544 60M1572 391L1601 382M1601 382L1614 363M1614 363L1618 348M1618 348L1622 338M1618 348L1613 338M1614 363L1623 351M1623 351L1621 341M1623 351L1629 344M1601 382L1620 389M1620 389L1633 391M1633 391L1643 390M1633 391L1640 387M1620 389L1633 385M1633 385L1643 384M1633 385L1642 379M1572 391L1605 398M1605 398L1631 405M1631 405L1646 409M1646 409L1654 418M1646 409L1658 407M1631 405L1647 401M1647 401L1660 404M1647 401L1657 395M1605 398L1626 416M1626 416L1636 431M1636 431L1645 441M1636 431L1644 442M1636 431L1644 439M1626 416L1642 429M1642 429L1654 432M1642 429L1650 439M1626 416L1642 421M1642 421L1653 419M1642 421L1649 432M1642 421L1653 422M1559 334L1572 296M1572 296L1565 269M1565 269L1546 255M1546 255L1542 239M1546 255L1530 252M1565 269L1571 250M1571 250L1570 237M1571 250L1578 235M1571 250L1567 234M1572 296L1594 274M1594 274L1603 254M1603 254L1598 241M1603 254L1603 240M1603 254L1603 238M1594 274L1605 256M1605 256L1601 241M1605 256L1614 242M1605 256L1611 243M1594 274L1608 254M1608 254L1617 243M1608 254L1620 239M1559 334L1592 304M1592 304L1622 287M1622 287L1649 286M1649 286L1665 293M1649 286L1665 286M1622 287L1649 279M1649 279L1666 264M1649 279L1667 266M1622 287L1645 272M1645 272L1667 276M1645 272L1659 262M1592 304L1611 284M1611 284L1632 279M1632 279L1646 279M1632 279L1642 268M1611 284L1630 277M1630 277L1639 269M1630 277L1644 280M1575 363L1615 342M1615 342L1650 336M1650 336L1671 348M1671 348L1689 349M1671 348L1683 364M1650 336L1676 327M1676 327L1690 312M1676 327L1696 330M1676 327L1693 318M1650 336L1674 335M1674 335L1688 337M1674 335L1687 327M1674 335L1687 326M1615 342L1643 350M1643 350L1660 356M1660 356L1672 352M1660 356L1667 367M1643 350L1658 367M1658 367L1672 377M1658 367L1671 377M1643 350L1659 368M1659 368L1658 387M1659 368L1677 372M1575 363L1619 374M1619 374L1638 395M1638 395L1640 416M1640 416L1652 426M1640 416L1648 431M1640 416L1643 434M1638 395L1650 410M1650 410L1658 422M1650 410L1649 422M1650 410L1664 413M1619 374L1646 390M1646 390L1661 403M1661 403L1671 411M1661 403L1671 414M1646 390L1669 392M1669 392L1685 384M1669 392L1681 405M1575 363L1620 358M1620 358L1648 337M1648 337L1671 329M1671 329L1689 337M1671 329L1685 324M1648 337L1671 338M1671 338L1687 333M1671 338L1683 350M1620 358L1654 345M1654 345L1683 343M1683 343L1700 351M1683 343L1697 333M1683 343L1702 336M1654 345L1673 334M1673 334L1687 324M1673 334L1683 325M1620 358L1646 335M1646 335L1664 314M1664 314L1679 300M1664 314L1671 296M1646 335L1664 322M1664 322L1683 320M1664 322L1678 311M1519 485L1547 455M1547 455L1571 449M1571 449L1582 436M1582 436L1584 425M1582 436L1591 426M1571 449L1590 454M1590 454L1598 467M1590 454L1603 449M1590 454L1603 452M1547 455L1573 452M1573 452L1587 441M1587 441L1599 439M1587 441L1598 439M1573 452L1591 451M1591 451L1603 460M1591 451L1606 451M1573 452L1588 463M1588 463L1597 469M1588 463L1590 474M1588 463L1601 470M1519 485L1517 444M1517 444L1520 418M1520 418L1518 402M1518 402L1512 392M1518 402L1511 395M1520 418L1534 405M1534 405L1543 394M1534 405L1545 405M1520 418L1519 399M1519 399L1511 387M1519 399L1514 387M1519 399L1511 389M1517 444L1529 423M1529 423L1543 411M1543 411L1555 407M1543 411L1551 401M1529 423L1534 408M1534 408L1535 395M1534 408L1532 398M1539 491L1591 485M1591 485L1624 479M1624 479L1641 491M1641 491L1657 493M1641 491L1651 503M1624 479L1651 485M1651 485L1667 495M1651 485L1672 486M1651 485L1664 495M1624 479L1641 460M1641 460L1661 457M1641 460L1652 449M1591 485L1616 459M1616 459L1630 436M1630 436L1648 431M1630 436L1641 418M1616 459L1640 453M1640 453L1659 457M1640 453L1657 447M1616 459L1629 438M1629 438L1631 418M1629 438L1641 425M1629 438L1642 423M1539 491L1593 495M1593 495L1629 497M1629 497L1650 495M1650 495L1664 485M1650 495L1663 500M1629 497L1657 493M1657 493L1669 478M1657 493L1677 498M1629 497L1656 502M1656 502L1675 508M1656 502L1676 507M1593 495L1627 490M1627 490L1650 488M1650 488L1665 489M1650 488L1666 480M1627 490L1647 472M1647 472L1665 464M1647 472L1659 463M1593 495L1628 512M1628 512L1657 509M1657 509L1676 506M1657 509L1670 498M1657 509L1675 501M1628 512L1642 536M1642 536L1656 548M1642 536L1656 553M1539 491L1571 449M1571 449L1600 420M1600 420L1621 398M1621 398L1628 377M1621 398L1638 392M1600 420L1616 400M1616 400L1620 380M1616 400L1634 394M1571 449L1567 414M1567 414L1570 385M1570 385L1567 367M1570 385L1565 367M1567 414L1556 390M1556 390L1545 375M1556 390L1554 374M1456 644L1504 640M1504 640L1535 661M1535 661L1560 674M1560 674L1574 690M1574 690L1579 707M1574 690L1586 697M1574 690L1586 700M1560 674L1575 689M1575 689L1584 699M1575 689L1584 702M1535 661L1561 661M1561 661L1574 651M1574 651L1579 641M1574 651L1581 644M1574 651L1586 647M1561 661L1580 655M1580 655L1590 646M1580 655L1592 651M1535 661L1554 680M1554 680L1576 686M1576 686L1589 679M1576 686L1592 690M1554 680L1565 695M1565 695L1570 707M1565 695L1577 698M1554 680L1574 688M1574 688L1590 688M1574 688L1589 696M1504 640L1532 660M1532 660L1553 666M1553 666L1567 662M1567 662L1577 662M1567 662L1574 657M1553 666L1566 677M1566 677L1573 687M1566 677L1576 684M1532 660L1559 660M1559 660L1576 664M1576 664L1586 673M1576 664L1583 675M1576 664L1588 661M1559 660L1579 650M1579 650L1587 636M1579 650L1592 645M1456 644L1513 627M1513 627L1561 629M1561 629L1592 612M1592 612L1601 591M1601 591L1603 577M1601 591L1600 576M1592 612L1616 598M1616 598L1631 590M1616 598L1630 587M1561 629L1592 625M1592 625L1618 622M1618 622L1635 615M1618 622L1629 607M1618 622L1633 627M1592 625L1608 607M1608 607L1622 600M1608 607L1622 596M1561 629L1591 630M1591 630L1611 619M1611 619L1628 616M1611 619L1626 621M1591 630L1612 635M1612 635L1625 627M1612 635L1626 634M1612 635L1622 645M1513 627L1540 597M1540 597L1572 593M1572 593L1596 587M1596 587L1616 591M1596 587L1617 589M1596 587L1613 583M1572 593L1596 598M1596 598L1614 599M1596 598L1614 604M1572 593L1590 607M1590 607L1605 619M1590 607L1599 620M1540 597L1548 566M1548 566L1570 552M1570 552L1587 550M1570 552L1575 532M1548 566L1554 547M1554 547L1565 539M1554 547L1548 536M1554 547L1559 536M1540 597L1543 568M1543 568L1538 548M1538 548L1526 538M1538 548L1528 540M1543 568L1552 548M1552 548L1564 538M1552 548L1562 534M1552 548L1552 530M1456 644L1518 647M1518 647L1562 653M1562 653L1595 656M1595 656L1619 646M1619 646L1633 635M1619 646L1641 647M1595 656L1618 656M1618 656L1636 662M1618 656L1635 650M1562 653L1587 639M1587 639L1610 634M1610 634L1623 642M1610 634L1623 626M1610 634L1624 642M1587 639L1605 641M1605 641L1615 646M1605 641L1613 649M1518 647L1550 628M1550 628L1580 632M1580 632L1597 648M1597 648L1612 649M1597 648L1612 657M1597 648L1610 653M1580 632L1596 647M1596 647L1603 663M1596 647L1602 660M1550 628L1578 624M1578 624L1601 624M1601 624L1616 630M1601 624L1617 620M1578 624L1596 630M1596 630L1608 630M1596 630L1604 643M1596 630L1608 636M1578 624L1594 607M1594 607L1608 606M1594 607L1608 607M1594 607L1612 603M1156 447L1093 396M1093 396L1040 376M1040 376L1006 360M1006 360L981 347M981 347L973 329M981 347L960 349M981 347L969 333M1006 360L985 349M985 349L980 336M985 349L968 344M1040 376L1002 367M1002 367L973 370M973 370L954 358M973 370L950 373M1002 367L980 355M980 355L963 354M980 355L964 352M980 355L974 339M1002 367L979 354M979 354L962 345M979 354L965 344M1093 396L1053 365M1053 365L1040 330M1040 330L1027 303M1027 303L1025 280M1027 303L1024 283M1040 330L1045 307M1045 307L1043 289M1045 307L1046 288M1053 365L1041 337M1041 337L1020 328M1020 328L1008 319M1020 328L1002 328M1041 337L1036 313M1036 313L1040 294M1036 313L1030 299M1036 313L1047 297M1156 447L1088 441M1088 441L1037 455M1037 455L1009 474M1009 474L990 487M990 487L977 494M990 487L976 498M1009 474L988 478M988 478L979 490M988 478L974 478M988 478L971 477M1009 474L991 492M991 492L975 503M991 492L985 510M1037 455L1001 439M1001 439L987 419M987 419L975 409M987 419L977 407M987 419L975 408M1001 439L986 420M986 420L971 409M986 420L981 403M1037 455L1001 452M1001 452L979 442M979 442L966 433M979 442L967 427M979 442L968 426M1001 452L982 437M982 437L973 422M982 437L964 437M982 437L966 426M1088 441L1045 466M1045 466L1012 471M1012 471L993 489M993 489L986 509M993 489L988 505M993 489L987 505M1012 471L987 469M987 469L970 461M987 469L968 472M987 469L973 457M1045 466L1014 463M1014 463L988 466M988 466L972 454M988 466L976 478M988 466L972 454M1014 463L994 468M994 468L982 475M994 468L983 473M994 468L983 465M1014 463L994 450M994 450L984 435M994 450L978 447M1045 466L1011 490M1011 490L986 495M986 495L970 505M986 495L971 504M1011 490L979 489M979 489L957 501M979 489L960 507M1088 441L1046 437M1046 437L1018 457M1018 457L1012 482M1012 482L1020 496M1012 482L1019 497M1012 482L1018 499M1018 457L1010 480M1010 480L1007 500M1010 480L993 489M1010 480L993 489M1046 437L1021 416M1021 416L998 404M998 404L979 407M998 404L981 405M998 404L992 388M1021 416L996 410M996 410L984 398M996 410L979 413M1021 416L1018 392M1018 392L1012 376M1018 392L1026 379M1046 437L1018 422M1018 422L1003 405M1003 405L1004 387M1003 405L991 398M1018 422L997 416M997 416L984 409M997 416L982 410M997 416L983 410M1186 393L1219 337M1219 337L1251 312M1251 312L1278 310M1278 310L1288 297M1288 297L1293 286M1288 297L1290 286M1278 310L1290 299M1290 299L1303 298M1290 299L1297 289M1251 312L1278 310M1278 310L1298 314M1298 314L1310 327M1298 314L1311 308M1298 314L1307 324M1278 310L1295 312M1295 312L1306 305M1295 312L1306 311M1219 337L1245 306M1245 306L1267 290M1267 290L1286 283M1286 283L1299 282M1286 283L1299 276M1267 290L1276 276M1276 276L1276 265M1276 276L1279 265M1276 276L1288 272M1267 290L1278 278M1278 278L1290 274M1278 278L1289 273M1245 306L1262 280M1262 280L1279 263M1279 263L1290 247M1279 263L1282 246M1262 280L1284 276M1284 276L1294 265M1284 276L1297 271M1219 337L1258 301M1258 301L1298 291M1298 291L1320 270M1320 270L1329 253M1320 270L1342 261M1298 291L1326 286M1326 286L1348 285M1326 286L1341 293M1258 301L1267 265M1267 265L1292 249M1292 249L1307 235M1292 249L1314 241M1292 249L1309 252M1267 265L1285 242M1285 242L1300 232M1285 242L1300 230M1186 393L1252 420M1252 420L1293 403M1293 403L1326 395M1326 395L1352 386M1352 386L1372 386M1352 386L1369 377M1352 386L1369 382M1326 395L1351 397M1351 397L1366 392M1351 397L1362 388M1293 403L1328 414M1328 414L1353 423M1353 423L1363 435M1353 423L1364 437M1353 423L1368 419M1328 414L1340 436M1340 436L1355 440M1340 436L1355 445M1340 436L1336 452M1328 414L1355 422M1355 422L1371 429M1355 422L1375 425M1355 422L1377 422M1293 403L1307 379M1307 379L1325 368M1325 368L1338 367M1325 368L1338 364M1325 368L1340 365M1307 379L1317 363M1317 363L1319 348M1317 363L1318 351M1317 363L1322 351M1252 420L1298 445M1298 445L1329 443M1329 443L1348 459M1348 459L1361 473M1348 459L1363 467M1348 459L1351 478M1329 443L1351 450M1351 450L1367 454M1351 450L1365 445M1351 450L1365 458M1298 445L1331 446M1331 446L1354 442M1354 442L1371 442M1354 442L1372 434M1331 446L1352 455M1352 455L1357 467M1352 455L1368 460M1352 455L1366 451M1252 420L1291 440M1291 440L1319 443M1319 443L1338 436M1338 436L1353 436M1338 436L1348 426M1319 443L1337 458M1337 458L1355 459M1337 458L1348 469M1337 458L1351 465M1319 443L1339 439M1339 439L1352 434M1339 439L1353 435M1291 440L1320 457M1320 457L1335 472M1335 472L1351 474M1335 472L1339 484M1320 457L1338 470M1338 470L1345 486M1338 470L1344 487M1291 440L1323 439M1323 439L1343 443M1343 443L1358 442M1343 443L1358 438M1323 439L1338 452M1338 452L1346 466M1338 452L1345 465M1179 225L1171 171M1171 171L1169 135M1169 135L1169 111M1169 111L1155 98M1155 98L1149 88M1155 98L1145 86M1169 111L1160 95M1160 95L1153 82M1160 95L1155 84M1160 95L1154 82M1169 111L1172 93M1172 93L1166 81M1172 93L1172 80M1169 135L1165 113M1165 113L1169 96M1169 96L1176 87M1169 96L1175 86M1165 113L1156 99M1156 99L1155 88M1156 99L1154 87M1171 171L1172 135M1172 135L1160 111M1160 111L1162 89M1162 89L1171 78M1162 89L1154 77M1162 89L1156 74M1160 111L1161 91M1161 91L1152 80M1161 91L1158 78M1161 91L1150 79M1172 135L1170 109M1170 109L1178 89M1178 89L1190 79M1178 89L1189 76M1170 109L1157 95M1157 95L1145 89M1157 95L1149 83M1157 95L1148 84M1179 225L1217 181M1217 181L1252 156M1252 156L1278 152M1278 152L1295 157M1295 157L1303 167M1295 157L1308 153M1278 152L1290 161M1290 161L1303 161M1290 161L1301 163M1290 161L1301 161M1252 156L1282 148M1282 148L1297 134M1297 134L1310 130M1297 134L1314 134M1282 148L1304 138M1304 138L1314 123M1304 138L1317 125M1252 156L1268 135M1268 135L1271 117M1271 117L1275 107M1271 117L1275 107M1271 117L1272 105M1268 135L1281 123M1281 123L1290 115M1281 123L1283 109M1281 123L1286 113M1268 135L1287 129M1287 129L1302 128M1287 129L1299 124M1287 129L1296 115M1217 181L1241 148M1241 148L1244 123M1244 123L1249 103M1249 103L1245 87M1249 103L1252 87M1244 123L1243 105M1243 105L1247 95M1243 105L1237 93M1241 148L1245 120M1245 120L1237 102M1237 102L1242 88M1237 102L1241 90M1245 120L1239 100M1239 100L1230 90M1239 100L1232 87M1239 100L1232 89M1241 148L1245 123M1245 123L1240 108M1240 108L1239 96M1240 108L1238 97M1245 123L1242 104M1242 104L1232 92M1242 104L1233 96M1242 104L1234 94M709 59L682 24M682 24L653 13M653 13L634 12M634 12L623 20M634 12L623 8M634 12L621 5M653 13L632 2M632 2L612 6M632 2L625 -17M682 24L673 -1M673 -1L671 -23M671 -23L662 -34M671 -23L681 -36M671 -23L677 -36M673 -1L662 -19M662 -19L661 -35M662 -19L659 -33M709 59L676 37M676 37L653 29M653 29L637 32M637 32L628 30M637 32L626 38M637 32L628 36M653 29L636 36M636 36L623 41M636 36L624 42M676 37L668 15M668 15L670 1M670 1L676 -9M670 1L679 -6M668 15L657 4M657 4L655 -8M657 4L647 1M668 15L665 -0M665 -0L669 -9M665 -0L659 -11M676 37L648 39M648 39L630 34M630 34L619 33M630 34L618 31M648 39L636 51M636 51L628 62M636 51L623 57M636 51L629 59M877 54L878 1M878 1L878 -38M878 -38L862 -61M862 -61L859 -78M859 -78L861 -89M859 -78L864 -89M859 -78L865 -88M862 -61L844 -65M844 -65L832 -65M844 -65L833 -60M844 -65L831 -68M878 -38L887 -63M887 -63L890 -85M890 -85L886 -101M890 -85L886 -98M887 -63L894 -80M894 -80L900 -92M894 -80L906 -86M878 1L880 -31M880 -31L870 -50M870 -50L871 -64M871 -64L877 -71M871 -64L876 -72M871 -64L876 -72M870 -50L863 -63M863 -63L857 -71M863 -63L857 -72M863 -63L861 -75M870 -50L858 -57M858 -57L854 -65M858 -57L849 -60M858 -57L852 -66M880 -31L886 -56M886 -56L903 -69M903 -69L918 -73M903 -69L916 -79M886 -56L903 -67M903 -67L914 -73M903 -67L914 -68M878 1L877 -39M877 -39L887 -61M887 -61L897 -75M897 -75L903 -86M897 -75L908 -77M897 -75L905 -84M887 -61L888 -77M888 -77L887 -89M888 -77L890 -89M888 -77L884 -89M877 -39L867 -62M867 -62L868 -80M868 -80L872 -91M868 -80L868 -94M867 -62L856 -77M856 -77L855 -91M856 -77L842 -79M867 -62L854 -69M854 -69L846 -78M854 -69L845 -73M854 -69L842 -70M877 54L877 -3M877 -3L871 -45M871 -45L876 -77M876 -77L894 -93M894 -93L900 -107M894 -93L908 -103M894 -93L901 -110M876 -77L891 -95M891 -95L907 -99M891 -95L900 -107M871 -45L872 -73M872 -73L885 -87M885 -87L896 -97M885 -87L893 -100M885 -87L900 -93M872 -73L881 -88M881 -88L885 -99M881 -88L879 -100M877 -3L867 -46M867 -46L850 -71M850 -71L836 -89M836 -89L827 -105M836 -89L821 -92M836 -89L823 -102M850 -71L850 -91M850 -91L845 -104M850 -91L843 -105M867 -46L862 -81M862 -81L856 -109M856 -109L864 -124M856 -109L845 -124M862 -81L864 -103M864 -103L862 -116M864 -103L865 -121M864 -103L876 -113M867 -46L880 -74M880 -74L891 -91M891 -91L901 -101M891 -91L902 -101M880 -74L882 -98M882 -98L878 -113M882 -98L893 -112M882 -98L890 -115M1504 60L1483 28M1483 28L1473 -0M1473 -0L1457 -13M1457 -13L1445 -12M1445 -12L1437 -16M1445 -12L1437 -16M1457 -13L1444 -14M1444 -14L1436 -20M1444 -14L1433 -15M1444 -14L1436 -13M1457 -13L1454 -26M1454 -26L1448 -35M1454 -26L1455 -35M1473 -0L1460 -19M1460 -19L1458 -37M1458 -37L1454 -47M1458 -37L1465 -49M1458 -37L1456 -49M1460 -19L1458 -34M1458 -34L1461 -45M1458 -34L1454 -43M1460 -19L1461 -35M1461 -35L1457 -47M1461 -35L1457 -45M1461 -35L1467 -46M1473 -0L1455 -10M1455 -10L1439 -14M1439 -14L1428 -12M1439 -14L1428 -18M1455 -10L1451 -23M1451 -23L1441 -28M1451 -23L1444 -28M1455 -10L1442 -20M1442 -20L1432 -23M1442 -20L1436 -31M1483 28L1483 1M1483 1L1474 -19M1474 -19L1465 -32M1465 -32L1467 -43M1465 -32L1467 -45M1474 -19L1460 -27M1460 -27L1451 -26M1460 -27L1454 -38M1483 1L1488 -19M1488 -19L1482 -29M1482 -29L1474 -34M1488 -19L1490 -32M1490 -32L1491 -42M1490 -32L1487 -41M1504 60L1490 23M1490 23L1489 -1M1489 -1L1487 -18M1487 -18L1490 -31M1490 -31L1489 -42M1490 -31L1486 -41M1487 -18L1486 -31M1486 -31L1488 -42M1486 -31L1481 -41M1489 -1L1489 -20M1489 -20L1496 -30M1496 -30L1494 -39M1489 -20L1495 -29M1495 -29L1494 -38M1489 -20L1482 -28M1490 23L1484 -9M1484 -9L1491 -27M1491 -27L1505 -36M1505 -36L1514 -34M1505 -36L1517 -38M1491 -27L1493 -40M1493 -40L1499 -46M1493 -40L1499 -46M1484 -9L1466 -24M1466 -24L1464 -41M1464 -41L1464 -52M1464 -41L1457 -53M1464 -41L1455 -49M1466 -24L1465 -38M1465 -38L1466 -47M1465 -38L1459 -45M1465 -38L1459 -45M1484 -9L1470 -26M1470 -26L1464 -40M1464 -40L1465 -50M1464 -40L1455 -47M1470 -26L1466 -39M1466 -39L1464 -50M1466 -39L1462 -47M1369 434L1407 458M1407 458L1434 458M1434 458L1454 460M1454 460L1466 453M1466 453L1472 444M1466 453L1475 454M1454 460L1469 463M1469 463L1477 459M1469 463L1475 471M1454 460L1465 468M1465 468L1474 469M1465 468L1471 477M1465 468L1473 468M1434 458L1451 460M1451 460L1461 452M1461 452L1467 446M1461 452L1467 445M1461 452L1466 445M1451 460L1464 462M1464 462L1474 463M1464 462L1473 467M1434 458L1452 446M1452 446L1464 435M1464 435L1474 427M1464 435L1470 426M1452 446L1456 433M1456 433L1459 426M1456 433L1458 424M1407 458L1433 465M1433 465L1450 462M1450 462L1463 468M1463 468L1472 468M1463 468L1474 468M1450 462L1460 469M1460 469L1465 477M1460 469L1468 475M1450 462L1461 454M1461 454L1470 448M1461 454L1470 450M1433 465L1453 468M1453 468L1462 477M1462 477L1462 487M1462 477L1470 480M1453 468L1468 471M1468 471L1479 476M1468 471L1476 481M1433 465L1447 475M1447 475L1460 478M1460 478L1468 484M1460 478L1469 476M1447 475L1454 485M1454 485L1458 493M1369 434L1413 449M1413 449L1435 476M1435 476L1460 485M1460 485L1476 493M1476 493L1489 489M1476 493L1488 491M1460 485L1476 482M1476 482L1484 472M1476 482L1489 478M1476 482L1485 476M1435 476L1456 491M1456 491L1477 491M1477 491L1490 496M1477 491L1488 498M1456 491L1472 496M1472 496L1485 494M1472 496L1479 506M1413 449L1449 443M1449 443L1470 427M1470 427L1478 408M1478 408L1479 391M1478 408L1485 398M1478 408L1483 395M1470 427L1479 411M1479 411L1491 405M1479 411L1485 400M1470 427L1487 429M1487 429L1498 434M1487 429L1496 438M1449 443L1465 427M1465 427L1480 423M1480 423L1491 421M1480 423L1489 418M1465 427L1467 413M1467 413L1464 403M1467 413L1464 402M1369 434L1417 430M1417 430L1447 433M1447 433L1465 436M1465 436L1478 438M1478 438L1489 436M1478 438L1488 434M1478 438L1488 438M1465 436L1474 445M1474 445L1482 448M1474 445L1475 453M1465 436L1477 430M1477 430L1486 425M1477 430L1486 427M1477 430L1487 425M1447 433L1464 423M1464 423L1479 418M1479 418L1484 407M1479 418L1489 421M1464 423L1471 412M1471 412L1478 405M1471 412L1475 404M1417 430L1447 410M1447 410L1464 394M1464 394L1483 389M1483 389L1498 385M1483 389L1498 389M1464 394L1468 378M1468 378L1466 366M1468 378L1470 368M1447 410L1460 389M1460 389L1457 371M1457 371L1457 358M1457 371L1457 357M1457 371L1462 357M1460 389L1476 379M1476 379L1490 380M1476 379L1489 380M1460 389L1474 378M1474 378L1484 371M1474 378L1482 368M1417 430L1453 442M1453 442L1481 453M1481 453L1501 454M1501 454L1513 444M1501 454L1514 453M1501 454L1512 460M1481 453L1504 447M1504 447L1517 441M1504 447L1519 445M1504 447L1514 436M1453 442L1472 464M1472 464L1489 477M1489 477L1491 491M1489 477L1495 492M1472 464L1491 479M1491 479L1493 493M1491 479L1507 485M1116 155L1163 131M1163 131L1195 111M1195 111L1207 89M1207 89L1209 73M1209 73L1210 60M1209 73L1217 65M1207 89L1214 76M1214 76L1222 68M1214 76L1220 67M1195 111L1217 103M1217 103L1234 101M1234 101L1243 92M1234 101L1241 93M1234 101L1245 107M1217 103L1232 106M1232 106L1242 111M1232 106L1242 105M1232 106L1240 110M1163 131L1195 115M1195 115L1212 97M1212 97L1219 79M1219 79L1224 65M1219 79L1229 72M1212 97L1213 80M1213 80L1211 68M1213 80L1217 69M1213 80L1219 68M1212 97L1214 78M1214 78L1210 67M1214 78L1218 66M1214 78L1224 69M1195 115L1211 92M1211 92L1223 79M1223 79L1231 66M1223 79L1234 72M1211 92L1223 76M1223 76L1235 66M1223 76L1238 69M1223 76L1235 70M1116 155L1163 110M1163 110L1190 75M1190 75L1216 70M1216 70L1229 58M1229 58L1239 50M1229 58L1243 53M1216 70L1228 55M1228 55L1236 47M1228 55L1240 54M1216 70L1234 63M1234 63L1240 52M1234 63L1245 53M1190 75L1212 58M1212 58L1230 56M1230 56L1239 49M1230 56L1239 49M1212 58L1230 58M1230 58L1242 55M1230 58L1243 58M1163 110L1190 70M1190 70L1204 41M1204 41L1218 28M1218 28L1227 16M1218 28L1230 19M1218 28L1229 24M1204 41L1210 23M1210 23L1218 14M1210 23L1222 14M1190 70L1202 42M1202 42L1217 27M1217 27L1234 28M1217 27L1224 14M1217 27L1223 14M1202 42L1219 28M1219 28L1225 17M1219 28L1232 22M1116 155L1178 161M1178 161L1218 159M1218 159L1246 149M1246 149L1264 157M1264 157L1277 155M1264 157L1277 152M1246 149L1257 129M1257 129L1274 122M1257 129L1255 113M1218 159L1245 169M1245 169L1268 174M1268 174L1282 169M1268 174L1286 176M1245 169L1265 182M1265 182L1279 190M1265 182L1276 193M1218 159L1239 139M1239 139L1247 121M1247 121L1257 113M1247 121L1247 105M1239 139L1257 131M1257 131L1271 128M1257 131L1267 120M1178 161L1215 133M1215 133L1221 106M1221 106L1211 86M1211 86L1206 70M1211 86L1196 80M1211 86L1201 77M1221 106L1238 92M1238 92L1248 82M1238 92L1247 80M1215 133L1241 120M1241 120L1263 123M1263 123L1280 119M1263 123L1278 122M1241 120L1259 111M1259 111L1272 104M1259 111L1270 104M1259 111L1274 107M1215 133L1238 115M1238 115L1250 101M1250 101L1253 89M1250 101L1250 89M1250 101L1257 88M1238 115L1250 96M1250 96L1260 87M1250 96L1265 90M1238 115L1253 103M1253 103L1266 96M1253 103L1267 98" stroke="#d4d4d4" stroke-width="2.5" fill="none" stroke-linecap="round"/>
<path d="M1320 300L1267 227M1200 160L1134 99M1050 300L970 240M1430 250L1491 198" stroke="#d4d4d4" stroke-width="6.0" fill="none" stroke-linecap="round"/>
<path d="M1267 227L1245 157M1267 227L1273 160M1267 227L1202 208M1134 99L1079 101M1134 99L1095 42M970 240L921 203M970 240L949 161M1491 198L1548 183M1491 198L1506 149M1380 620L1456 644M1250 480L1156 447M1100 420L1186 393M1150 300L1179 225M900 120L877 54M1500 120L1504 60M1300 420L1369 434M1050 200L1116 155" stroke="#d4d4d4" stroke-width="4.0" fill="none" stroke-linecap="round"/>
<path d="M930 330L864 269M980 160L899 122M1450 420L1524 389M1400 550L1488 532" stroke="#d4d4d4" stroke-width="5.0" fill="none" stroke-linecap="round"/>
<path d="M760 90L709 59" stroke="#d4d4d4" stroke-width="3.0" fill="none" stroke-linecap="round"/>
<path d="M1053 110L1100 91M1175 22L1139 1M949 244L891 230M1509 122L1550 91M1026 302L1071 281M1127 510L1096 456M1229 68L1270 14M993 29L949 -12M914 184L883 144M1180 413L1197 352M1182 90L1213 63M1309 145L1310 88M1102 41L1135 5M1070 489L1132 468M1139 83L1182 37M1239 518L1272 492M1416 412L1382 371M1283 330L1262 293M1000 361L933 349M1300 418L1252 396M949 459L930 400M1534 444L1519 400M872 68L923 49M961 441L964 378M1087 132L1146 101M1027 159L999 116M1443 230L1377 227M1317 308L1277 288M1442 260L1431 211M1051 85L1081 53M1302 475L1347 427M1533 209L1556 175M1263 268L1221 219M1101 286L1097 237M1493 291L1453 253M1393 21L1385 -33M1145 191L1095 160M1076 236L1067 170M903 178L850 135M1194 213L1137 178" stroke="#b4b4b4" stroke-width="3.0" fill="none" stroke-linecap="round"/>
<path d="M1100 91L1116 64M1116 64L1118 45M1118 45L1122 30M1118 45L1124 31M1118 45L1130 35M1116 64L1121 42M1121 42L1125 25M1121 42L1129 30M1100 91L1119 61M1119 61L1140 50M1140 50L1154 54M1140 50L1158 44M1119 61L1134 41M1134 41L1135 23M1134 41L1149 36M1134 41L1132 23M1119 61L1138 46M1138 46L1142 28M1138 46L1154 42M1139 1L1118 -27M1118 -27L1119 -50M1119 -50L1121 -66M1119 -50L1124 -64M1119 -50L1116 -66M1118 -27L1103 -47M1103 -47L1094 -59M1103 -47L1085 -52M1103 -47L1091 -56M1139 1L1110 -11M1110 -11L1101 -28M1101 -28L1097 -40M1101 -28L1103 -41M1110 -11L1093 -25M1093 -25L1083 -35M1093 -25L1082 -33M1110 -11L1093 -28M1093 -28L1074 -29M1093 -28L1077 -32M891 230L844 232M844 232L815 209M815 209L794 198M815 209L787 209M815 209L793 191M844 232L817 216M817 216L810 195M817 216L802 203M891 230L850 253M850 253L832 286M832 286L817 304M832 286L836 311M850 253L822 276M822 276L798 286M822 276L812 301M850 253L817 267M817 267L804 290M817 267L801 285M1550 91L1585 90M1585 90L1604 107M1604 107L1612 123M1604 107L1624 111M1604 107L1622 108M1585 90L1606 99M1606 99L1621 97M1606 99L1624 96M1550 91L1576 62M1576 62L1605 57M1605 57L1624 58M1605 57L1625 61M1576 62L1600 60M1600 60L1618 52M1600 60L1611 49M1600 60L1617 55M1576 62L1579 34M1579 34L1566 20M1579 34L1570 17M1579 34L1593 22M1071 281L1099 261M1099 261L1124 256M1124 256L1135 239M1124 256L1134 242M1124 256L1144 260M1099 261L1113 244M1113 244L1129 237M1113 244L1123 233M1113 244L1124 233M1099 261L1104 237M1104 237L1118 222M1104 237L1114 223M1071 281L1107 278M1107 278L1132 291M1132 291L1151 301M1132 291L1146 304M1107 278L1130 267M1130 267L1146 260M1130 267L1147 268M1107 278L1131 280M1131 280L1150 283M1131 280L1147 286M1096 456L1074 414M1074 414L1069 382M1069 382L1053 367M1069 382L1051 366M1074 414L1060 383M1060 383L1038 374M1060 383L1050 360M1074 414L1048 399M1048 399L1030 388M1048 399L1034 384M1048 399L1026 405M1096 456L1074 419M1074 419L1046 409M1046 409L1034 387M1046 409L1031 396M1074 419L1048 398M1048 398L1030 387M1048 398L1023 390M1096 456L1059 445M1059 445L1038 434M1038 434L1019 438M1038 434L1032 418M1038 434L1032 419M1059 445L1030 448M1030 448L1016 461M1030 448L1007 458M1030 448L1013 460M1059 445L1041 423M1041 423L1031 405M1041 423L1023 417M1270 14L1314 -10M1314 -10L1349 -13M1349 -13L1370 -8M1349 -13L1367 -27M1349 -13L1372 -9M1314 -10L1353 -25M1353 -25L1367 -55M1353 -25L1370 -54M1270 14L1287 -32M1287 -32L1311 -55M1311 -55L1335 -66M1311 -55L1315 -81M1311 -55L1312 -76M1287 -32L1286 -62M1286 -62L1298 -82M1286 -62L1296 -80M1287 -32L1296 -69M1296 -69L1315 -89M1296 -69L1302 -93M1270 14L1289 -26M1289 -26L1309 -48M1309 -48L1310 -71M1309 -48L1328 -63M1309 -48L1328 -58M1289 -26L1288 -61M1288 -61L1293 -82M1288 -61L1298 -83M1288 -61L1277 -86M949 -12L912 -20M912 -20L892 -40M892 -40L881 -58M892 -40L888 -59M912 -20L886 -6M886 -6L870 5M886 -6L861 -3M949 -12L910 -33M910 -33L878 -27M878 -27L857 -28M878 -27L854 -27M878 -27L855 -38M910 -33L890 -52M890 -52L870 -56M890 -52L873 -64M910 -33L888 -54M888 -54L878 -74M888 -54L876 -72M888 -54L885 -73M883 144L876 113M876 113L881 94M881 94L876 83M881 94L888 84M876 113L882 91M882 91L877 74M882 91L884 78M883 144L844 132M844 132L821 143M821 143L804 138M821 143L804 149M844 132L814 120M814 120L802 100M814 120L802 98M883 144L851 125M851 125L826 110M826 110L808 109M826 110L807 102M851 125L829 110M829 110L808 110M829 110L823 94M829 110L816 99M1197 352L1193 301M1193 301L1183 262M1183 262L1196 234M1183 262L1181 231M1193 301L1181 269M1181 269L1171 251M1181 269L1172 244M1197 352L1205 312M1205 312L1229 291M1229 291L1249 289M1229 291L1247 285M1229 291L1239 272M1205 312L1213 279M1213 279L1224 261M1213 279L1224 261M1213 63L1240 53M1240 53L1257 38M1257 38L1260 21M1257 38L1271 29M1257 38L1271 26M1240 53L1263 58M1263 58L1279 49M1263 58L1281 60M1263 58L1280 60M1213 63L1220 35M1220 35L1223 15M1223 15L1220 1M1223 15L1221 0M1223 15L1223 1M1220 35L1221 12M1221 12L1222 -3M1221 12L1223 -1M1221 12L1233 2M1310 88L1316 50M1316 50L1332 26M1332 26L1338 9M1332 26L1348 10M1332 26L1353 21M1316 50L1304 25M1304 25L1303 7M1304 25L1292 12M1316 50L1322 20M1322 20L1321 -4M1322 20L1335 1M1322 20L1313 -2M1310 88L1291 46M1291 46L1272 21M1272 21L1259 7M1272 21L1263 4M1272 21L1266 -3M1291 46L1272 14M1272 14L1250 5M1272 14L1244 3M1135 5L1163 -10M1163 -10L1185 -6M1185 -6L1199 -1M1185 -6L1200 -14M1163 -10L1181 -21M1181 -21L1186 -34M1181 -21L1191 -29M1135 5L1167 -16M1167 -16L1189 -25M1189 -25L1197 -37M1189 -25L1204 -30M1167 -16L1194 -14M1194 -14L1210 -24M1194 -14L1211 -21M1167 -16L1188 -32M1188 -32L1201 -44M1188 -32L1203 -47M1132 468L1178 477M1178 477L1196 502M1196 502L1205 520M1196 502L1201 522M1178 477L1209 479M1209 479L1226 467M1209 479L1226 490M1178 477L1198 498M1198 498L1203 517M1198 498L1214 509M1132 468L1180 448M1180 448L1216 452M1216 452L1241 450M1216 452L1236 461M1180 448L1216 428M1216 428L1248 420M1216 428L1229 398M1216 428L1247 432M1182 37L1198 -3M1198 -3L1213 -33M1213 -33L1228 -56M1213 -33L1223 -59M1198 -3L1218 -22M1218 -22L1237 -22M1218 -22L1231 -39M1198 -3L1225 -14M1225 -14L1249 -16M1225 -14L1246 -24M1182 37L1206 -1M1206 -1L1235 -20M1235 -20L1255 -40M1235 -20L1253 -41M1235 -20L1255 -34M1206 -1L1232 -12M1232 -12L1246 -26M1232 -12L1250 -15M1232 -12L1248 -6M1272 492L1302 488M1302 488L1326 480M1326 480L1343 486M1326 480L1334 467M1302 488L1318 475M1318 475L1327 465M1318 475L1323 460M1318 475L1325 460M1272 492L1295 475M1295 475L1311 461M1311 461L1324 456M1311 461L1321 451M1295 475L1315 472M1315 472L1330 471M1315 472L1328 473M1382 371L1371 334M1371 334L1374 309M1374 309L1380 292M1374 309L1386 296M1371 334L1373 303M1373 303L1387 288M1373 303L1366 282M1371 334L1362 307M1362 307L1360 287M1362 307L1354 290M1382 371L1372 331M1372 331L1345 313M1345 313L1325 316M1345 313L1340 291M1345 313L1324 301M1372 331L1376 298M1376 298L1367 274M1376 298L1364 280M1376 298L1389 282M1382 371L1372 335M1372 335L1383 308M1383 308L1398 298M1383 308L1390 287M1372 335L1352 314M1352 314L1336 298M1352 314L1346 296M1352 314L1344 293M1372 335L1346 319M1346 319L1336 303M1346 319L1341 299M1262 293L1231 281M1231 281L1218 261M1218 261L1205 250M1218 261L1204 258M1231 281L1206 289M1206 289L1188 295M1206 289L1187 289M1262 293L1243 273M1243 273L1242 251M1242 251L1241 235M1242 251L1253 237M1243 273L1229 264M1229 264L1218 261M1229 264L1224 253M1229 264L1216 258M1262 293L1260 263M1260 263L1271 242M1271 242L1270 227M1271 242L1284 233M1271 242L1272 225M1260 263L1256 242M1256 242L1259 228M1256 242L1245 234M1256 242L1249 227M933 349L887 360M887 360L851 357M851 357L823 352M851 357L828 373M887 360L863 381M863 381L850 399M863 381L844 396M887 360L862 387M862 387L836 394M862 387L837 389M933 349L890 336M890 336L876 309M876 309L858 300M876 309L869 293M876 309L882 292M890 336L867 307M867 307L861 284M867 307L843 303M1252 396L1232 366M1232 366L1233 343M1233 343L1243 332M1233 343L1232 327M1232 366L1235 339M1235 339L1225 323M1235 339L1236 321M1232 366L1215 351M1215 351L1200 351M1215 351L1206 335M1252 396L1219 403M1219 403L1201 393M1201 393L1196 380M1201 393L1190 383M1219 403L1197 397M1197 397L1185 383M1197 397L1185 387M1219 403L1199 394M1199 394L1183 397M1199 394L1181 392M1199 394L1186 398M1252 396L1226 361M1226 361L1216 329M1216 329L1221 308M1216 329L1202 311M1216 329L1199 313M1226 361L1213 335M1213 335L1212 313M1213 335L1204 315M930 400L926 360M926 360L910 334M910 334L890 320M910 334L900 315M926 360L941 336M941 336L957 330M941 336L957 330M941 336L959 327M930 400L941 358M941 358L946 330M946 330L938 313M946 330L954 313M941 358L945 332M945 332L935 313M945 332L953 313M941 358L956 335M956 335L964 318M956 335L968 322M1519 400L1520 367M1520 367L1510 347M1510 347L1515 331M1510 347L1501 331M1510 347L1499 333M1520 367L1532 347M1532 347L1539 329M1532 347L1547 340M1532 347L1544 331M1519 400L1500 372M1500 372L1483 355M1483 355L1474 342M1483 355L1480 341M1500 372L1479 365M1479 365L1472 351M1479 365L1464 362M1479 365L1463 361M1500 372L1492 345M1492 345L1481 328M1492 345L1493 326M1492 345L1492 325M923 49L959 41M959 41L984 56M984 56L1003 67M984 56L1003 66M959 41L982 47M982 47L996 51M982 47L998 47M982 47L1001 44M923 49L958 36M958 36L981 17M981 17L983 -3M981 17L982 -7M958 36L980 20M980 20L994 6M980 20L986 4M980 20L998 20M958 36L984 40M984 40L999 47M984 40L995 55M964 378L974 330M974 330L963 299M963 299L962 277M963 299L962 275M963 299L956 277M974 330L1006 307M1006 307L1010 281M1006 307L1034 294M974 330L983 299M983 299L982 276M983 299L981 276M964 378L967 330M967 330L961 299M961 299L950 283M961 299L969 277M967 330L954 298M954 298L947 274M954 298L955 276M954 298L959 273M967 330L966 292M966 292L966 268M966 292L975 265M966 292L945 271M1146 101L1183 65M1183 65L1221 65M1221 65L1248 58M1221 65L1247 54M1183 65L1191 34M1191 34L1201 12M1191 34L1198 13M1146 101L1161 55M1161 55L1146 24M1146 24L1151 2M1146 24L1131 7M1161 55L1171 23M1171 23L1171 1M1171 23L1170 1M1146 101L1167 62M1167 62L1191 39M1191 39L1198 19M1191 39L1208 23M1191 39L1203 21M1167 62L1189 40M1189 40L1204 23M1189 40L1210 34M1189 40L1212 38M1167 62L1193 53M1193 53L1208 38M1193 53L1210 50M999 116L973 93M973 93L950 83M950 83L931 88M950 83L935 74M950 83L943 67M973 93L952 80M952 80L935 68M952 80L937 71M952 80L945 62M999 116L973 92M973 92L948 80M948 80L936 66M948 80L933 71M973 92L946 85M946 85L929 94M946 85L929 93M973 92L945 92M945 92L927 102M945 92L927 101M1377 227L1336 237M1336 237L1306 224M1306 224L1289 210M1306 224L1280 228M1336 237L1317 264M1317 264L1313 288M1317 264L1296 279M1317 264L1317 285M1377 227L1334 228M1334 228L1304 212M1304 212L1290 192M1304 212L1284 204M1334 228L1302 225M1302 225L1278 225M1302 225L1278 215M1277 288L1252 296M1252 296L1234 309M1234 309L1229 323M1234 309L1219 316M1252 296L1230 300M1230 300L1216 307M1230 300L1218 310M1277 288L1252 272M1252 272L1240 253M1240 253L1232 239M1240 253L1227 241M1240 253L1237 237M1252 272L1233 266M1233 266L1217 264M1233 266L1224 256M1252 272L1237 260M1237 260L1232 249M1237 260L1228 253M1277 288L1251 270M1251 270L1226 268M1226 268L1208 276M1226 268L1211 277M1226 268L1214 254M1251 270L1230 258M1230 258L1212 252M1230 258L1220 245M1431 211L1401 191M1401 191L1393 169M1393 169L1381 154M1393 169L1380 159M1401 191L1388 171M1388 171L1382 157M1388 171L1392 153M1431 211L1448 179M1448 179L1446 151M1446 151L1433 135M1446 151L1434 138M1446 151L1433 138M1448 179L1447 152M1447 152L1433 139M1447 152L1433 136M1081 53L1106 40M1106 40L1116 24M1116 24L1127 20M1116 24L1122 15M1106 40L1116 20M1116 20L1120 6M1116 20L1118 2M1081 53L1107 44M1107 44L1123 32M1123 32L1129 19M1123 32L1137 25M1107 44L1128 46M1128 46L1142 51M1128 46L1143 39M1107 44L1127 43M1127 43L1141 43M1127 43L1137 34M1347 427L1354 382M1354 382L1346 348M1346 348L1328 335M1346 348L1358 324M1354 382L1372 352M1372 352L1395 343M1372 352L1381 328M1372 352L1373 328M1347 427L1399 420M1399 420L1430 394M1430 394L1442 369M1430 394L1437 366M1399 420L1427 397M1427 397L1451 398M1427 397L1453 397M1427 397L1450 380M1556 175L1580 156M1580 156L1602 158M1602 158L1617 161M1602 158L1617 150M1580 156L1603 156M1603 156L1619 148M1603 156L1618 158M1556 175L1574 154M1574 154L1580 137M1580 137L1587 129M1580 137L1586 128M1574 154L1596 150M1596 150L1612 144M1596 150L1610 141M1574 154L1576 133M1576 133L1582 121M1576 133L1576 118M1576 133L1572 118M1556 175L1580 157M1580 157L1600 143M1600 143L1618 140M1600 143L1607 127M1580 157L1599 141M1599 141L1604 126M1599 141L1608 128M1580 157L1595 143M1595 143L1597 127M1595 143L1608 143M1221 219L1186 184M1186 184L1164 158M1164 158L1147 143M1164 158L1147 138M1164 158L1143 141M1186 184L1151 166M1151 166L1135 149M1151 166L1122 155M1221 219L1182 202M1182 202L1154 206M1154 206L1137 207M1154 206L1135 210M1154 206L1134 215M1182 202L1154 200M1154 200L1134 193M1154 200L1134 198M1221 219L1188 196M1188 196L1172 177M1172 177L1157 174M1172 177L1166 157M1188 196L1158 194M1158 194L1141 183M1158 194L1140 177M1158 194L1142 175M1097 237L1093 206M1093 206L1098 184M1098 184L1110 175M1098 184L1108 172M1093 206L1096 181M1096 181L1107 171M1096 181L1086 164M1096 181L1110 167M1093 206L1073 191M1073 191L1062 178M1073 191L1067 177M1097 237L1086 204M1086 204L1064 191M1064 191L1043 194M1064 191L1045 189M1064 191L1048 188M1086 204L1069 189M1069 189L1055 178M1069 189L1061 172M1069 189L1054 187M1086 204L1085 180M1085 180L1088 162M1085 180L1086 162M1453 253L1439 213M1439 213L1423 191M1423 191L1407 186M1423 191L1413 176M1439 213L1441 179M1441 179L1431 154M1441 179L1443 155M1439 213L1414 199M1414 199L1395 192M1414 199L1394 199M1453 253L1419 235M1419 235L1409 212M1409 212L1395 199M1409 212L1395 199M1419 235L1400 218M1400 218L1394 204M1400 218L1383 208M1400 218L1395 201M1453 253L1432 227M1432 227L1410 212M1410 212L1392 212M1410 212L1389 204M1410 212L1390 208M1432 227L1410 225M1410 225L1397 237M1410 225L1397 215M1432 227L1428 201M1428 201L1418 187M1428 201L1436 188M1385 -33L1384 -75M1384 -75L1367 -102M1367 -102L1347 -114M1367 -102L1362 -126M1367 -102L1344 -114M1384 -75L1391 -108M1391 -108L1400 -128M1391 -108L1394 -130M1391 -108L1379 -131M1385 -33L1360 -57M1360 -57L1344 -75M1344 -75L1326 -79M1344 -75L1325 -81M1344 -75L1337 -91M1360 -57L1342 -71M1342 -71L1339 -86M1342 -71L1338 -88M1385 -33L1355 -60M1355 -60L1351 -92M1351 -92L1360 -110M1351 -92L1334 -111M1351 -92L1335 -107M1355 -60L1330 -74M1330 -74L1311 -82M1330 -74L1319 -90M1095 160L1069 132M1069 132L1063 103M1063 103L1058 80M1063 103L1047 83M1069 132L1045 129M1045 129L1032 117M1045 129L1030 128M1095 160L1055 165M1055 165L1028 166M1028 166L1013 175M1028 166L1016 178M1055 165L1028 160M1028 160L1010 152M1028 160L1016 143M1028 160L1009 159M1067 170L1064 124M1064 124L1077 91M1077 91L1100 77M1077 91L1085 69M1077 91L1079 66M1064 124L1083 94M1083 94L1078 69M1083 94L1100 80M1067 170L1049 129M1049 129L1050 93M1050 93L1067 76M1050 93L1063 67M1049 129L1052 97M1052 97L1067 83M1052 97L1055 76M850 135L808 136M808 136L781 142M781 142L765 151M781 142L764 146M781 142L766 151M808 136L775 143M775 143L753 134M775 143L753 146M775 143L752 142M850 135L812 94M812 94L778 91M778 91L756 76M778 91L754 94M778 91L758 78M812 94L790 60M790 60L774 42M790 60L762 44M790 60L790 34M850 135L794 126M794 126L758 111M758 111L730 105M758 111L733 120M794 126L754 119M754 119L729 131M754 119L724 127M1137 178L1087 155M1087 155L1058 129M1058 129L1027 129M1058 129L1047 102M1087 155L1069 124M1069 124L1073 95M1069 124L1063 97M1069 124L1058 104M1137 178L1095 179M1095 179L1074 196M1074 196L1055 204M1074 196L1066 215M1074 196L1055 198M1095 179L1069 194M1069 194L1047 193M1069 194L1054 206M1095 179L1065 190M1065 190L1055 210M1065 190L1052 205" stroke="#b4b4b4" stroke-width="2.5" fill="none" stroke-linecap="round"/>
<path d="M1282 53L1277 36M1277 36L1272 5M1272 5L1282 -24M1282 -24L1302 -44M1409 266L1376 261M1376 261L1364 257M1364 257L1344 242M1344 242L1325 246M1499 303L1523 321M1523 321L1534 328M942 127L947 149M947 149L975 163M1400 133L1417 143M1417 143L1430 169M1430 169L1432 190M1432 190L1423 220M1007 356L994 326M994 326L986 309M986 309L992 282M1197 176L1181 177M1181 177L1170 166M1170 166L1155 153M1155 153L1126 133M1171 196L1171 174M1171 174L1153 146M1153 146L1144 128M1539 452L1555 440M1555 440L1582 428M1582 428L1600 435M1080 273L1114 269M1114 269L1140 263M1092 45L1096 11M1096 11L1085 -1M1085 -1L1072 -30M1072 -30L1063 -39M1197 11L1212 17M1212 17L1225 24M1225 24L1236 30M1236 30L1262 41M1325 201L1297 199M1297 199L1283 199M1283 199L1258 200M1258 200L1238 189M1123 492L1091 501M1091 501L1063 517M1063 517L1052 540M1052 540L1055 555M1055 110L1079 121M1079 121L1093 143M1093 143L1107 148M1107 148L1125 147M969 247L988 259M988 259L991 279M991 279L1003 311M1003 311L1021 324M1021 401L1000 404M1000 404L987 398M1308 288L1290 302M1290 302L1279 310M1279 310L1269 334M1269 334L1261 368M1138 263L1108 279M1108 279L1082 269M1082 269L1063 251M1502 434L1501 453M1501 453L1506 473M1506 473L1510 487M1066 268L1074 247M1074 247L1086 221M1086 221L1096 214M1096 214L1117 214M1404 556L1403 531M1403 531L1420 511M1391 167L1394 152M1394 152L1418 136M1418 136L1437 108M1437 108L1432 88M1179 416L1161 420M1161 420L1154 431M1154 431L1139 440M1139 440L1114 462M996 372L973 351M973 351L959 339M959 339L952 308M952 308L956 291M1523 351L1495 367M1495 367L1468 358M1270 477L1260 468M1260 468L1231 450M1231 450L1204 448M1204 448L1179 434M1352 66L1364 46M1364 46L1396 36M1396 36L1413 10M1413 10L1418 -16M955 193L960 222M960 222L977 234M977 234L984 251M984 251L985 265M1215 338L1211 312M1211 312L1196 282M1196 282L1200 251M1200 251L1215 226M1519 265L1546 267M1546 267L1560 281M1524 465L1531 443M1531 443L1537 428M1537 428L1550 419M1550 419L1571 405M1263 354L1270 326M1270 326L1265 314M1265 314L1280 284M1280 284L1289 252M1134 17L1155 30M1155 30L1177 26M1177 26L1191 24M1191 24L1216 41M940 100L952 105M952 105L972 107M972 107L990 89M1338 488L1339 505M1339 505L1322 527M1322 527L1319 553M1434 542L1428 526M1428 526L1411 514M1411 514L1390 515M1458 96L1456 113M1456 113L1454 134M1454 134L1445 153M1152 322L1138 321M1138 321L1116 326M1116 326L1091 340M1162 426L1197 431M1197 431L1209 431M1209 431L1237 450M1427 487L1421 505M1421 505L1427 533M1427 533L1452 550M1212 420L1235 409M1235 409L1253 385M1253 385L1274 368M1163 243L1153 267M1153 267L1159 296M1338 578L1341 547M1341 547L1333 519M1154 450L1140 444M1140 444L1134 432M1270 309L1281 284M1281 284L1277 252M1466 604L1465 572M1465 572L1474 557M1474 557L1478 529M1478 529L1490 504M1430 118L1446 118M1446 118L1457 110M1457 110L1471 111M1471 111L1492 120M892 286L915 285M915 285L936 275M936 275L966 261M1032 335L1030 348M1030 348L1047 371M1047 371L1053 383M1053 383L1042 412M1543 619L1532 647M1532 647L1546 678M1456 268L1474 249M1474 249L1506 247M1506 247L1536 234M1366 526L1391 507M1391 507L1415 510M1110 428L1104 401M1104 401L1099 385M1099 385L1103 369M1103 369L1131 355M1103 14L1113 33M1113 33L1121 60M1121 60L1125 80M1136 317L1160 311M1160 311L1188 297M1188 297L1203 283M1203 283L1203 260M1413 535L1404 505M1404 505L1416 481M1416 481L1411 460M1411 460L1394 439M791 293L782 305M782 305L772 332M772 332L758 343M1365 545L1377 573M1377 573L1369 588M1417 126L1406 101M1406 101L1377 87M1031 15L1014 -14M1014 -14L1015 -42M1468 248L1462 274M1462 274L1439 290M1354 383L1373 385M1373 385L1401 390M962 77L979 60M979 60L983 46M1163 421L1134 423M1134 423L1117 431M1388 537L1385 520M1385 520L1366 503M1366 503L1363 484M1512 608L1487 594M1487 594L1455 581M1455 581L1445 562M1445 562L1416 554M1191 122L1186 137M1186 137L1171 164M1226 342L1215 360M1215 360L1194 374M1194 374L1170 374M1170 374L1142 374M1048 384L1018 368M1018 368L999 363M999 363L967 366M967 366L953 375M1216 355L1239 342M1239 342L1267 349M1267 349L1289 361M967 94L972 124M972 124L968 153M968 153L966 169M1434 296L1418 269M1418 269L1415 247M1162 383L1129 381M1129 381L1108 379M909 116L899 104M899 104L886 94M886 94L875 86M1392 495L1392 468M1392 468L1382 449M1382 449L1380 414M986 1L994 27M994 27L1010 43M1321 399L1310 418M1310 418L1305 443M1305 443L1311 469M1069 29L1081 26M1081 26L1090 11M1090 11L1090 -21M1315 537L1300 546M1300 546L1284 541M1284 541L1267 530M1265 37L1268 70M1268 70L1258 97M1258 97L1255 112M1311 423L1333 422M1333 422L1361 425M1361 425L1378 415M1243 386L1226 378M1226 378L1204 378M971 243L957 240M957 240L929 231M1489 21L1461 26M1461 26L1446 22M1446 22L1426 13M1426 13L1402 -7M1448 243L1442 266M1442 266L1420 276M1420 276L1406 288M1406 288L1395 318M1445 129L1440 149M1440 149L1434 163M1307 184L1339 185M1339 185L1352 199M1352 199L1371 210M1030 321L1033 337M1033 337L1056 357M1293 524L1289 496M1289 496L1289 474M1289 474L1295 448M1229 170L1244 166M1244 166L1275 163M1275 163L1293 177M1292 285L1275 305M1275 305L1270 322M1270 322L1255 350M1282 568L1311 553M1311 553L1340 559M1354 603L1355 568M1355 568L1329 547M1329 547L1306 550M1466 397L1471 375M1471 375L1475 352M962 149L973 155M973 155L994 179M994 179L1012 184M1012 184L1034 203M1327 0L1310 -23M1310 -23L1310 -50M1310 -50L1290 -68M1290 -68L1271 -82M1398 147L1384 166M1384 166L1376 187M1376 187L1364 197M1387 209L1393 229M1393 229L1404 251M1048 198L1041 183M1041 183L1037 167M890 249L863 248M863 248L848 241M848 241L830 224M830 224L821 193M1315 262L1324 253M1324 253L1344 246M1344 246L1353 225M1353 225L1381 214M1193 516L1219 535M1219 535L1235 553M1235 553L1237 568M1127 231L1115 211M1115 211L1100 201M1100 201L1091 178M1371 453L1368 428M1368 428L1346 413M1037 94L1002 98M1002 98L984 85M984 85L953 75M953 75L940 52M1342 465L1361 440M1361 440L1385 418M1385 418L1404 395M1039 372L1054 375M1054 375L1085 389M1085 389L1110 411M1110 411L1116 423M956 326L982 334M982 334L1003 355M1003 355L1017 383M1017 383L1037 398M1208 84L1183 73M1183 73L1172 59M1172 59L1157 50M1157 50L1151 32M1161 371L1162 353M1162 353L1154 321M1228 71L1239 56M1239 56L1266 37M1266 37L1279 30M1052 413L1058 399M1058 399L1059 384M1059 384L1045 367M1265 375L1277 403M1277 403L1272 416M1272 416L1279 432M1279 432L1285 447M1282 107L1300 101M1300 101L1322 90M1292 258L1308 263M1308 263L1330 248M1330 248L1348 250M853 323L837 325M837 325L817 327M817 327L795 333M1040 463L1067 454M1067 454L1084 439M1084 439L1093 421M1093 421L1093 408M1189 548L1204 519M1204 519L1208 496M1208 496L1217 485M1425 416L1447 390M1447 390L1443 357M1367 469L1372 497M1372 497L1378 516M1378 516L1374 529M1374 529L1356 546M1319 55L1309 70M1309 70L1290 87M1379 426L1353 415M1353 415L1331 401M1331 401L1322 378M1448 512L1429 509M1429 509L1411 496M1411 496L1379 489M1379 254L1366 271M1366 271L1354 303M1081 228L1061 246M1061 246L1033 247M1033 247L1010 241M1010 241L993 217M1090 141L1082 161M1082 161L1074 181M1534 186L1555 192M1555 192L1586 202M1586 202L1594 212M1594 212L1593 225M1165 319L1139 328M1139 328L1114 336M1193 474L1213 484M1213 484L1228 485M1228 485L1245 488M1245 488L1272 474M1448 133L1435 156M1435 156L1416 171M1076 274L1081 307M1081 307L1079 330M1079 330L1061 352M1432 292L1423 280M1423 280L1394 263M1491 644L1476 625M1476 625L1471 608M1471 608L1457 590M905 326L884 330M884 330L858 328M858 328L845 308M1137 104L1109 95M1109 95L1098 80M940 177L953 172M953 172L969 142M929 207L897 209M897 209L885 216M1474 331L1458 346M1458 346L1424 354M1424 354L1400 367M1054 132L1078 134M1078 134L1098 136M1098 136L1117 156M1117 156L1141 180M971 194L967 181M967 181L973 154M973 154L992 141M992 141L1014 121M1553 95L1532 78M1532 78L1515 76M1515 76L1491 72M1491 72L1475 58M1331 94L1326 108M1326 108L1336 130M1336 130L1330 149M1140 539L1135 522M1135 522L1109 511M1109 511L1102 499M1102 499L1079 488M1530 415L1538 406M1538 406L1557 405M1557 405L1578 399M1299 76L1314 63M1314 63L1332 55M1046 342L1050 356M1050 356L1049 369M1049 369L1048 403M1048 403L1057 427M1115 288L1136 284M1136 284L1147 276M1147 276L1169 263M1169 263L1177 244M1237 545L1266 547M1266 547L1290 539M1447 456L1447 429M1447 429L1447 401M1447 401L1453 373M1091 350L1119 359M1119 359L1143 364M1011 132L993 118M993 118L969 111M969 111L956 85M956 85L950 57M1513 617L1546 624M1546 624L1572 616M1572 616L1592 625M1592 625L1621 643M1251 425L1268 438M1268 438L1297 438M1297 438L1308 428M1278 296L1281 307M1281 307L1273 319M1273 319L1261 323M1261 323L1230 323M1459 522L1470 540M1470 540L1482 568M1482 568L1493 582M1288 294L1291 309M1291 309L1301 332M1301 332L1302 354M1011 98L1027 72M1027 72L1023 60M1023 60L1015 47M1015 47L1020 33M1169 486L1174 463M1174 463L1179 439M1153 410L1165 417M1165 417L1170 445M1170 445L1179 457M1096 213L1085 206M1085 206L1069 205M1069 205L1062 195M966 122L970 101M970 101L983 86M983 86L1014 77M1357 453L1341 458M1341 458L1330 482M1330 482L1322 503M1322 503L1320 518M1453 409L1433 416M1433 416L1417 443M1197 70L1181 79M1181 79L1173 109M1395 32L1411 53M1411 53L1440 64M1419 302L1409 312M1409 312L1408 335M1408 335L1385 352M1385 352L1379 376M1559 145L1581 148M1581 148L1598 143M1598 143L1625 147M892 337L892 313M892 313L913 289M913 289L919 270M1507 130L1509 115M1509 115L1504 103M1504 103L1506 82M1506 82L1498 59M1529 595L1536 575M1536 575L1541 560M1541 560L1550 529M1550 529L1547 501M1167 372L1187 384M1187 384L1206 399M1206 399L1225 418M1547 562L1529 544M1529 544L1526 522M1515 424L1483 423M1483 423L1454 406M1454 406L1441 382M1197 115L1228 112M1228 112L1242 123M1242 123L1251 131M1251 131L1263 148M1006 9L973 0M973 0L953 13M953 13L926 18M853 275L830 253M830 253L826 236M1231 411L1225 398M1225 398L1218 371M1218 371L1194 359M1396 412L1422 390M1422 390L1451 390M1451 390L1475 407M1448 56L1436 67M1436 67L1432 89M1432 89L1427 119M1427 119L1417 128M993 126L991 147M991 147L969 169M1150 302L1147 317M1147 317L1158 336M1158 336L1158 367M1141 394L1156 394M1156 394L1183 403M1134 276L1134 264M1134 264L1134 250M1425 211L1437 203M1437 203L1459 184M1459 184L1484 176M1103 352L1092 367M1092 367L1068 378M1130 259L1143 260M1143 260L1165 281M1245 140L1259 153M1259 153L1272 163M1272 163L1289 189M1289 189L1295 207M1327 142L1298 133M1298 133L1278 129M1426 304L1411 299M1411 299L1379 308M1054 6L1038 8M1038 8L1009 -2M1040 186L1060 188M1060 188L1085 189M1085 189L1114 197M1114 197L1135 199M1365 256L1383 249M1383 249L1396 238M1396 238L1422 231M1302 245L1308 256M1308 256L1307 275M1307 275L1302 288M1302 288L1289 315M995 199L975 214M975 214L962 235M962 235L949 261M949 261L922 268M1558 168L1592 175M1592 175L1618 183M1618 183L1644 194M1644 194L1656 191M1403 483L1395 495M1395 495L1373 514M1159 323L1169 347M1169 347L1163 363M1262 205L1272 192M1272 192L1286 166M938 210L954 226M954 226L966 230M966 230L999 242M1506 578L1531 558M1531 558L1541 530M1113 368L1084 365M1084 365L1060 378M1060 378L1045 406M1045 406L1041 430M1553 112L1578 98M1578 98L1598 75M1598 75L1597 49M1333 210L1359 200M1359 200L1380 179M1141 155L1149 142M1149 142L1161 130M1245 468L1265 467M1265 467L1273 457M1273 457L1305 453M1317 440L1343 448M1343 448L1356 458M1509 624L1529 614M1529 614L1558 598M1558 598L1576 603M1280 87L1314 93M1314 93L1345 78M1345 78L1373 60M1105 424L1092 432M1092 432L1073 427M1191 117L1210 115M1210 115L1223 115M1223 115L1254 120M1233 527L1232 540M1232 540L1214 555M978 423L977 436M977 436L973 465M1436 432L1423 429M1423 429L1406 434M1406 434L1392 448M1392 448L1386 471M1219 448L1233 480M1233 480L1243 490M1243 490L1275 496M1275 496L1305 486M1074 400L1086 396M1086 396L1103 379M1495 610L1492 590M1492 590L1479 576M1479 576L1450 572M1450 572L1419 584M1541 632L1539 619M1539 619L1529 608M1529 608L1499 590M1316 532L1341 512M1341 512L1366 517M1366 517L1389 515M1389 515L1415 532M1432 304L1434 334M1434 334L1413 358M1413 358L1396 375M974 316L992 325M992 325L1003 356M1003 356L1010 377M1010 377L1009 389M1504 120L1506 141M1506 141L1522 158M1522 158L1538 167M1244 225L1261 231M1261 231L1273 250M1557 269L1587 264M1587 264L1601 246M876 351L848 365M848 365L834 360M1080 403L1081 422M1081 422L1109 443M1400 403L1419 380M1419 380L1416 351M1349 380L1353 394M1353 394L1358 406M1358 406L1376 412M1196 445L1186 455M1186 455L1172 453M1172 453L1158 451M1408 93L1395 99M1395 99L1382 92M1382 92L1362 76M1362 76L1344 78M1457 547L1476 545M1476 545L1501 556M1426 545L1416 577M1416 577L1394 599M1394 599L1368 601M1119 343L1109 321M1109 321L1097 315M1097 315L1085 311M1085 311L1065 297M972 296L966 284M966 284L953 264M902 309L890 306M890 306L867 302M867 302L853 305M853 305L839 315M1465 49L1445 65M1445 65L1440 90M1440 90L1429 96M1057 114L1065 124M1065 124L1085 136M1085 136L1099 152M1099 152L1109 178M1181 321L1204 301M1204 301L1234 285M1309 450L1334 428M1334 428L1334 415M1354 525L1351 510M1351 510L1353 495M1320 330L1334 318M1334 318L1340 299M1340 299L1363 279M1363 279L1367 261M1122 109L1124 128M1124 128L1134 140M978 48L1004 50M1004 50L1019 36M1019 36L1022 18M1069 86L1053 91M1053 91L1023 91M1023 91L1002 75M1393 398L1379 384M1379 384L1381 363M1332 445L1312 435M1312 435L1286 416M1286 416L1281 394M1281 394L1254 378M1171 435L1162 420M1162 420L1141 403M866 296L875 327M875 327L868 360M868 360L873 384M1250 59L1229 82M1229 82L1224 93M1224 93L1210 97M1210 97L1188 104M877 357L863 360M863 360L841 352M1228 87L1238 95M1238 95L1249 124M1010 146L1037 127M1037 127L1047 120M1047 120L1063 108M1555 319L1528 310M1528 310L1513 294M1513 294L1506 282M1521 320L1525 294M1525 294L1517 274M1517 274L1512 258M1154 329L1133 312M1133 312L1125 298M1125 298L1121 285M1121 285L1101 262M925 353L896 336M896 336L881 336M881 336L852 333M1340 2L1361 -6M1361 -6L1381 -4M1381 -4L1395 11M1019 418L1005 410M1005 410L988 416M1471 615L1452 641M1452 641L1423 650M1423 650L1410 659M1410 659L1398 677M1071 123L1079 112M1079 112L1076 79M1473 136L1448 135M1448 135L1432 146M1432 146L1405 150M898 365L885 354M885 354L885 330M885 330L910 306M1060 135L1075 115M1075 115L1090 109M1090 109L1105 80M946 79L940 45M940 45L915 22M915 22L906 2M998 73L1019 55M1019 55L1028 43M1039 231L1053 240M1053 240L1070 238M1070 238L1088 249M1147 339L1126 357M1126 357L1122 382M1479 27L1471 13M1471 13L1448 -7M1448 -7L1429 -21M1410 488L1402 502M1402 502L1381 517M1327 72L1339 83M1339 83L1358 82M1131 112L1152 114M1152 114L1173 133M1173 133L1182 163M1182 163L1175 175M1163 334L1165 320M1165 320L1160 301M1054 321L1053 335M1053 335L1059 361M1433 279L1455 280M1455 280L1466 271M1466 271L1478 260M974 280L981 254M981 254L996 231M996 231L1006 200M1006 200L1026 185M1405 478L1387 492M1387 492L1361 510M1361 510L1346 506M1346 506L1332 486M1092 210L1080 213M1080 213L1053 199M1053 199L1035 199M956 262L940 276M940 276L936 307M936 307L937 320M937 320L934 346M1542 195L1561 188M1561 188L1585 195M1585 195L1618 184M1618 184L1630 184M1019 42L1024 19M1024 19L1036 2M1036 2L1028 -28M1470 514L1479 524M1479 524L1482 536M1482 536L1491 567M1491 567L1509 582M1396 376L1410 380M1410 380L1437 401M1373 502L1376 469M1376 469L1365 438M1386 131L1383 147M1383 147L1382 174M1490 195L1478 219M1478 219L1480 253M1480 253L1472 273M1299 10L1319 11M1319 11L1343 30M1343 30L1367 39M1502 648L1530 668M1530 668L1547 692M1449 486L1456 501M1456 501L1448 524M1448 524L1437 530M1469 424L1489 401M1489 401L1515 384M1515 384L1547 394M1547 394L1560 400M1246 77L1276 66M1276 66L1297 73M1297 73L1310 92M1498 241L1513 241M1513 241L1537 227M1329 306L1309 291M1309 291L1297 275M1297 275L1268 260M1268 260L1239 253M1104 498L1114 521M1114 521L1119 540M1119 540L1122 557M1122 557L1122 589M981 91L967 85M967 85L958 69M958 69L937 43M1376 28L1348 36M1348 36L1336 56M1336 56L1326 76M1441 126L1448 95M1448 95L1463 68M1463 68L1490 62M1490 62L1512 73M1217 139L1231 120M1231 120L1240 94M1240 94L1233 82M1065 273L1054 282M1054 282L1054 296M1054 296L1040 323M1040 323L1028 340M1033 220L1025 239M1025 239L1012 265M1374 128L1344 127M1344 127L1330 130M1330 130L1308 154M1308 154L1284 167M1509 591L1528 570M1528 570L1525 537M1525 537L1508 512M915 353L911 341M911 341L907 328M907 328L903 303M903 303L911 277M1026 364L1007 371M1007 371L999 389M1358 473L1327 472M1327 472L1306 478M1306 478L1278 482M1278 482L1253 481M957 66L935 59M935 59L917 62M917 62L898 60M898 60L879 42M886 161L877 193M877 193L886 210M886 210L898 218M1281 65L1296 38M1296 38L1291 18M1291 18L1287 1M981 222L996 232M996 232L1014 245M1014 245L1043 250M983 327L980 295M980 295L959 280M959 280L929 277M929 277L908 269M1273 446L1260 456M1260 456L1259 469M1259 469L1262 503M1364 425L1372 437M1372 437L1383 442M1383 442L1412 442M1051 271L1069 279M1069 279L1099 290M1142 111L1126 125M1126 125L1117 139M1299 440L1306 470M1306 470L1304 494M1304 494L1286 519M1389 236L1395 248M1395 248L1413 269M1413 269L1426 282M1426 282L1425 310M1095 30L1094 2M1094 2L1102 -27M932 119L942 143M942 143L937 154M937 154L937 184M1559 16L1544 27M1544 27L1523 48M1416 618L1433 630M1433 630L1451 632M1323 345L1321 321M1321 321L1328 301M1377 499L1360 519M1360 519L1333 525M1333 525L1305 516M1305 516L1292 490M1468 161L1452 164M1452 164L1435 155M1435 155L1410 144M1475 89L1465 71M1465 71L1447 46M1166 173L1152 158M1152 158L1153 130M1532 33L1515 20M1515 20L1506 -8M1506 -8L1510 -32M1510 -32L1527 -61M1291 53L1272 50M1272 50L1256 58M1256 58L1229 49M1229 49L1211 39M1057 194L1054 169M1054 169L1050 147M1050 147L1029 125M1526 109L1539 139M1539 139L1549 172M1557 174L1556 195M1556 195L1564 219M1564 219L1565 246M1565 246L1562 269M920 149L948 144M948 144L974 140M974 140L994 128M994 128L1015 135M1468 511L1470 536M1470 536L1482 559M1482 559L1479 581M1479 581L1466 606M1038 379L1008 363M1008 363L975 370M1413 140L1446 135M1446 135L1469 110M1469 110L1499 95M1487 66L1473 79M1473 79L1440 85M1187 514L1178 523M1178 523L1180 542M1180 542L1181 577M1068 446L1070 474M1070 474L1048 499M1418 246L1426 268M1426 268L1415 292M1504 3L1492 -14M1492 -14L1472 -17M1472 -17L1459 -17M1345 18L1338 -13M1338 -13L1320 -40M1320 -40L1324 -52M1126 355L1142 350M1142 350L1148 338M1471 87L1503 98M1503 98L1531 96M1252 249L1280 244M1280 244L1292 244M1292 244L1309 250M1533 561L1551 556M1551 556L1576 553M1576 553L1590 541M1590 541L1601 516M1324 486L1319 520M1319 520L1321 547M1321 547L1339 561M962 266L930 278M930 278L899 280M899 280L876 304M876 304L873 322M1486 177L1468 172M1468 172L1450 158M1335 477L1338 459M1338 459L1327 442M1327 442L1314 417M1314 417L1289 399M1231 112L1237 129M1237 129L1228 158M1124 448L1145 421M1145 421L1179 420M1179 420L1198 402M1198 402L1209 385M1503 642L1522 639M1522 639L1544 627M1110 185L1101 213M1101 213L1083 229M1083 229L1077 248M995 115L1028 115M1028 115L1053 101M1053 101L1062 87M1062 87L1061 71M828 225L821 201M821 201L812 184M815 287L802 269M802 269L787 265M787 265L759 247M1039 373L1022 401M1022 401L1019 427M1019 427L1027 460M1027 460L1038 466M1023 201L1029 233M1029 233L1035 259M1035 259L1039 280M1039 280L1017 307M1294 490L1265 508M1265 508L1235 497M931 290L957 309M957 309L964 338M964 338L982 356M1434 541L1453 536M1453 536L1480 548M1122 378L1145 372M1145 372L1167 372M1167 372L1200 364M1498 228L1523 221M1523 221L1535 224M1535 224L1562 208M1223 334L1240 309M1240 309L1249 288M1249 288L1274 281M1274 281L1300 280M1506 538L1517 554M1517 554L1533 575M1482 550L1472 540M1472 540L1453 528M1453 528L1427 511M1447 127L1437 105M1437 105L1413 81M1413 81L1395 81M1342 207L1328 204M1328 204L1314 205M1537 205L1530 224M1530 224L1523 249M1523 249L1534 267M990 291L972 312M972 312L951 332M951 332L934 346M1320 123L1335 116M1335 116L1352 98M1387 103L1377 117M1377 117L1363 132M1363 132L1356 163M1356 163L1355 187M1365 488L1346 484M1346 484L1317 490M1317 490L1297 487M1297 487L1278 492M1488 365L1474 379M1474 379L1475 404M1475 404L1498 428M1301 124L1319 96M1319 96L1320 67M1320 67L1300 39M1300 39L1276 25M1298 522L1290 540M1290 540L1281 560M1216 176L1242 181M1242 181L1254 178M1335 81L1351 90M1351 90L1360 98M1360 98L1356 131M1356 131L1335 154M1068 64L1083 78M1083 78L1087 111M1087 111L1072 131M1072 131L1069 156M934 311L917 296M917 296L912 285M912 285L914 258M1425 239L1439 237M1439 237L1466 238M1110 353L1086 355M1086 355L1053 351M1262 206L1245 217M1245 217L1219 228M883 137L915 142M915 142L935 131M1509 43L1501 61M1501 61L1497 82M1497 82L1479 99M1479 99L1475 115M1362 161L1346 152M1346 152L1323 155M1323 155L1305 143M1305 143L1299 131M1175 110L1187 141M1187 141L1191 162M1191 162L1207 173M1110 301L1142 292M1142 292L1160 295M1391 212L1397 199M1397 199L1414 186M1322 461L1310 484M1310 484L1290 501M1290 501L1263 497M1355 246L1376 237M1376 237L1381 226M1482 184L1466 201M1466 201L1457 230M1525 109L1511 110M1511 110L1494 95M1494 95L1491 72M1007 405L988 403M988 403L973 395M952 126L965 156M965 156L975 188M1495 358L1476 359M1476 359L1455 362M1455 362L1439 374M1439 374L1410 379M1052 461L1061 483M1061 483L1081 501M1081 501L1101 517M1462 414L1457 429M1457 429L1440 439M1404 415L1402 384M1402 384L1388 354M1388 354L1372 335M1291 576L1266 582M1266 582L1245 587M1245 587L1232 603M946 177L971 193M971 193L983 198M983 198L993 230M993 230L998 256M1166 220L1166 206M1166 206L1155 196M1155 196L1129 194M1129 194L1114 175M1168 56L1155 62M1155 62L1141 75M1141 75L1124 93M957 142L930 154M930 154L911 182M1447 517L1431 538M1431 538L1420 552M1420 552L1405 554M1405 554L1390 574M1179 327L1165 305M1165 305L1164 280M1164 280L1188 257M1445 124L1431 130M1431 130L1418 139M1127 220L1141 241M1141 241L1148 252M884 230L866 214M866 214L845 215M1221 368L1218 338M1218 338L1215 311M1215 311L1193 293M1498 407L1481 400M1481 400L1471 375M1471 375L1473 344M872 242L898 241M898 241L923 221M923 221L936 196M1204 560L1194 582M1194 582L1183 600M1183 600L1165 603M1165 603L1147 619M1005 388L993 397M993 397L975 420M933 75L939 52M939 52L934 36M934 36L918 28M918 28L889 22M1537 338L1520 351M1520 351L1514 368M1514 368L1512 381M1004 171L1001 190M1001 190L1010 207M1010 207L1014 230M1014 230L1034 247M1302 367L1299 353M1299 353L1313 324M1313 324L1327 311M1327 311L1356 294M1338 32L1348 16M1348 16L1376 6M1376 6L1400 -13M1158 456L1146 437M1146 437L1113 425M1158 180L1172 167M1172 167L1182 147M1182 147L1198 136M1198 136L1219 137M1400 594L1410 577M1410 577L1424 555M1122 437L1105 419M1105 419L1080 414M1080 414L1053 426M1134 65L1166 68M1166 68L1194 83M1194 83L1220 99M1220 99L1251 100M1529 312L1507 327M1507 327L1491 332M1491 332L1469 340M1469 340L1446 333M1040 212L1064 226M1064 226L1078 231M1286 494L1252 495M1252 495L1235 503M1343 564L1368 564M1368 564L1383 558" stroke="#c8c8c8" stroke-width="2.5" fill="none" stroke-linecap="round"/>
<path d="M1100,0 Q1160,70 1192,117 Q1223,164 1267,214 Q1311,263 1340,336 Q1369,410 1382,465 Q1395,520 1388,578 Q1380,637 1355,710 Q1330,784 1315,838 L1300,893" fill="none" stroke="#cdcdcd" stroke-width="46" stroke-linecap="round" stroke-linejoin="round"/>
<path d="M1255,0 Q1262,80 1266,113 Q1270,146 1285,188 L1300,230" fill="none" stroke="#c0c0c0" stroke-width="32" stroke-linecap="round" stroke-linejoin="round"/>
<path d="M1405,0 Q1415,120 1418,177 Q1420,234 1416,282 Q1412,330 1406,370 L1400,410" fill="none" stroke="#b8b8b8" stroke-width="34" stroke-linecap="round" stroke-linejoin="round"/>
<path d="M1545,291 Q1490,330 1459,352 L1428,374" fill="none" stroke="#b0b0b0" stroke-width="30" stroke-linecap="round" stroke-linejoin="round"/>
<path d="M1062,597 Q1065,470 1078,425 Q1090,380 1110,330 Q1130,280 1135,255 L1140,230" fill="none" stroke="#a4a4a4" stroke-width="28" stroke-linecap="round" stroke-linejoin="round"/>
<path d="M1000,470 Q960,420 945,400 L930,380" fill="none" stroke="#949494" stroke-width="14" stroke-linecap="round" stroke-linejoin="round"/>
<path d="M970,540 Q965,460 942,425 L920,390" fill="none" stroke="#8c8c8c" stroke-width="14" stroke-linecap="round" stroke-linejoin="round"/>
<path d="M1290,700 Q1285,560 1272,520 L1260,480" fill="none" stroke="#888" stroke-width="10" stroke-linecap="round" stroke-linejoin="round"/>
<path d="M1260,525 Q1350,540 1400,535 Q1450,530 1506,538 L1561,545" fill="none" stroke="#d0d0d0" stroke-width="4"/>
<path d="M1400,470 Q1480,500 1520,485 L1561,470" fill="none" stroke="#d0d0d0" stroke-width="4"/>
<path d="M1430,560 Q1500,600 1520,640 Q1540,680 1530,740 Q1520,800 1510,835 L1500,870" fill="none" stroke="#d0d0d0" stroke-width="4"/>
<path d="M1420,620 Q1470,700 1455,765 L1440,830" fill="none" stroke="#d0d0d0" stroke-width="4"/>
<path d="M261 450L254 380M254 380L242 336M242 336L227 310M227 310L211 292M211 292L197 280M211 292L200 277M227 310L211 292M211 292L195 279M211 292L200 275M242 336L232 304M232 304L227 282M227 282L221 265M227 282L222 266M232 304L231 282M231 282L229 265M231 282L227 264M254 380L260 335M260 335L264 301M264 301L262 274M262 274L255 252M262 274L261 252M264 301L263 279M263 279L260 260M263 279L265 264M260 335L266 303M266 303L276 282M276 282L279 263M276 282L285 265M266 303L275 280M275 280L284 264M275 280L284 266M244 450L260 382M260 382L258 323M258 323L253 284M253 284L244 260M244 260L232 243M244 260L237 244M253 284L257 258M257 258L262 241M257 258L258 241M258 323L248 281M248 281L249 250M249 250L253 227M249 250L252 229M248 281L233 249M233 249L223 226M233 249L218 223M260 382L262 333M262 333L267 300M267 300L269 276M269 276L270 258M269 276L268 258M267 300L270 277M270 277L276 261M270 277L276 263M262 333L260 294M260 294L253 263M253 263L250 238M253 263L245 243M260 294L251 263M251 263L245 238M251 263L247 241M258 450L268 381M268 381L278 326M278 326L286 288M286 288L295 259M295 259L302 239M295 259L305 238M286 288L299 263M299 263L310 246M299 263L306 244M278 326L276 287M276 287L278 259M278 259L278 238M278 259L278 236M276 287L274 260M274 260L271 240M274 260L270 242M268 381L271 335M271 335L273 303M273 303L277 278M277 278L278 259M277 278L283 261M273 303L272 281M272 281L275 266M272 281L272 264M271 335L276 304M276 304L278 279M278 279L279 263M278 279L276 262M276 304L280 283M280 283L284 269M280 283L285 268M262 450L279 382M279 382L282 324M282 324L289 279M289 279L291 247M291 247L287 224M291 247L298 224M289 279L288 243M288 243L288 217M288 243L292 216M282 324L281 283M281 283L286 252M286 252L286 228M286 252L285 231M281 283L280 255M280 255L275 238M280 255L283 237M279 382L300 335M300 335L322 304M322 304L341 282M341 282L354 264M341 282L354 266M322 304L336 277M336 277L348 261M336 277L349 261M300 335L324 304M324 304L338 281M338 281L352 267M338 281L352 269M324 304L338 280M338 280L348 259M338 280L342 261M263 450L273 381M273 381L285 333M285 333L288 297M288 297L287 271M287 271L285 250M287 271L282 253M288 297L284 273M284 273L277 256M284 273L277 257M285 333L284 294M284 294L277 268M277 268L274 248M277 268L268 249M284 294L284 267M284 267L289 249M284 267L285 245M273 381L271 324M271 324L261 277M261 277L252 240M252 240L238 210M252 240L238 211M261 277L257 238M257 238L246 207M257 238L256 207M271 324L276 287M276 287L284 259M284 259L287 237M284 259L290 240M276 287L283 263M283 263L290 248M283 263L288 245M375 480L370 420M370 420L361 371M361 371L358 335M358 335L349 310M349 310L345 290M349 310L340 293M358 335L355 312M355 312L354 293M355 312L354 295M361 371L356 336M356 336L350 311M350 311L342 291M350 311L345 293M356 336L355 313M355 313L356 297M355 313L353 294M370 420L364 379M364 379L350 348M350 348L336 330M336 330L327 313M336 330L328 314M350 348L346 323M346 323L339 304M346 323L341 307M364 379L359 345M359 345L361 321M361 321L364 305M361 321L367 304M359 345L357 323M357 323L358 308M357 323L358 307M384 480L385 420M385 420L381 379M381 379L381 351M381 351L381 331M381 331L382 314M381 331L384 317M381 351L380 330M380 330L374 312M380 330L381 313M381 379L378 350M378 350L381 330M381 330L383 317M381 330L383 314M378 350L376 327M376 327L373 311M376 327L372 310M385 420L381 370M381 370L382 334M382 334L390 310M390 310L397 292M390 310L393 290M382 334L386 306M386 306L391 284M386 306L390 288M381 370L385 330M385 330L382 297M382 297L385 269M382 297L375 274M385 330L388 299M388 299L389 277M388 299L387 276M379 480L371 421M371 421L354 380M354 380L341 352M341 352L331 335M331 335L325 322M331 335L324 323M341 352L326 332M326 332L317 317M326 332L311 317M354 380L338 353M338 353L325 333M325 333L314 320M325 333L318 319M338 353L329 334M329 334L327 319M329 334L322 322M371 421L355 383M355 383L346 354M346 354L342 335M342 335L339 321M342 335L342 321M346 354L337 334M337 334L334 316M337 334L334 318M355 383L347 353M347 353L341 334M341 334L339 319M341 334L341 319M347 353L339 331M339 331L329 314M339 331L337 314M363 480L370 420M370 420L367 380M367 380L362 352M362 352L362 330M362 330L363 314M362 330L359 311M362 352L352 330M352 330L345 314M352 330L347 313M367 380L364 348M364 348L356 327M356 327L352 311M356 327L351 314M364 348L365 323M365 323L360 302M365 323L369 305M370 420L365 378M365 378L362 347M362 347L359 324M359 324L354 308M359 324L361 308M362 347L354 325M354 325L347 309M354 325L349 308M365 378L362 347M362 347L356 323M356 323L352 306M356 323L351 304M362 347L356 324M356 324L349 309M356 324L348 306M364 480L373 421M373 421L371 376M371 376L361 341M361 341L347 315M347 315L341 295M347 315L342 296M361 341L350 315M350 315L346 294M350 315L343 294M371 376L372 341M372 341L379 316M379 316L378 297M379 316L378 299M372 341L377 314M377 314L385 294M377 314L387 294M373 421L381 377M381 377L390 342M390 342L393 318M393 318L396 302M393 318L398 300M390 342L395 315M395 315L396 295M395 315L400 295M381 377L384 341M384 341L394 314M394 314L402 294M394 314L407 296M384 341L388 316M388 316L390 296M388 316L390 300M600 445L598 423M598 423L600 405M600 405L600 390M600 390L599 379M600 390L602 379M600 405L597 392M597 392L592 383M597 392L595 382M598 423L596 406M596 406L592 392M592 392L589 383M592 392L589 383M596 406L594 393M594 393L593 382M594 393L594 383M622 445L622 423M622 423L619 405M619 405L621 392M621 392L624 383M621 392L620 381M619 405L620 390M620 390L622 380M620 390L618 380M622 423L624 408M624 408L625 396M625 396L628 388M625 396L625 388M624 408L627 396M627 396L630 387M627 396L630 387M601 445L597 423M597 423L589 406M589 406L582 395M582 395L576 386M582 395L574 387M589 406L581 396M581 396L577 387M581 396L577 388M597 423L599 406M599 406L603 392M603 392L602 381M603 392L604 382M599 406L599 393M599 393L597 382M599 393L598 384" stroke="#8a8a8a" stroke-width="2" fill="none" opacity="0.75"/>
<rect x="1112" y="335" width="16" height="11" fill="#fff"/>
</g>
</svg><!--/VIDEO-->
<div class="a" style="left:509px;top:428px;width:44px;height:372px;background:#e6e6e6"></div>

<!-- form labels -->
<div class="t" style="left:570px;top:443px;letter-spacing:0.2px">Sensitivity</div>
<div class="t" style="left:570px;top:514px">Action</div>
<div class="t" style="left:570px;top:566px">Target Filter</div>
<div class="t" style="left:570px;top:617px;letter-spacing:0.2px">Effective Target</div>
<div class="t" style="left:570px;top:694px">Time Plan</div>

<!-- slider -->
<div class="a" style="left:839px;top:448px;width:381px;height:8px;border-radius:4px;background:#e4e5e7"></div>
<div class="a" style="left:839px;top:448px;width:169px;height:8px;background:#1890ff"></div>
<div class="dot" style="left:834.2px;top:446.6px"></div>
<div class="num" style="left:839.2px;color:#333">1</div>
<div class="dot" style="left:876.5px;top:446.6px"></div>
<div class="num" style="left:881.5px;color:#333">2</div>
<div class="dot" style="left:919.2px;top:446.6px"></div>
<div class="num" style="left:924.2px;color:#333">3</div>
<div class="dot" style="left:961.5px;top:446.6px"></div>
<div class="num" style="left:966.5px;color:#333">4</div>
<div class="a" style="left:1000.7px;top:444.6px;width:14px;height:14px;border-radius:50%;background:#fff;border:1px solid #e4e4e4"></div>
<div class="num" style="left:1007.7px;color:#333">5</div>
<div class="dot" style="left:1045.0px;top:446.6px"></div>
<div class="num" style="left:1050.0px;color:#999">6</div>
<div class="dot" style="left:1087.2px;top:446.6px"></div>
<div class="num" style="left:1092.2px;color:#999">7</div>
<div class="dot" style="left:1130.0px;top:446.6px"></div>
<div class="num" style="left:1135.0px;color:#999">8</div>
<div class="dot" style="left:1172.2px;top:446.6px"></div>
<div class="num" style="left:1177.2px;color:#999">9</div>
<div class="dot" style="left:1214.5px;top:446.6px"></div>
<div class="num" style="left:1219.5px;color:#999">10</div>


<!-- action -->
<div class="cb on" style="left:832px;top:513px"></div>
<div class="t" style="left:859px;top:513px">Appear</div>
<div class="cb" style="left:930px;top:513px"></div>
<div class="t" style="left:956px;top:513px;letter-spacing:-0.3px">Cross</div>
<div class="cb" style="left:1014px;top:513px;background:#f5f5f5"></div>
<div class="t" style="left:1039px;top:513px;color:#bfbfbf;letter-spacing:0.7px">Inside</div>

<div class="a" style="left:832px;top:562px;width:49px;height:25px;border-radius:13px;background:#1890ff"><div class="a" style="right:3px;top:2.5px;width:20px;height:20px;border-radius:50%;background:#fff;box-shadow:1px 2px 3px rgba(0,40,90,0.35)"></div></div>

<div class="cb" style="left:832px;top:616px"></div>
<div class="t" style="left:859px;top:616px;letter-spacing:0.5px">Human</div>
<div class="cb on" style="left:930px;top:616px"></div>
<div class="t" style="left:957px;top:616px;letter-spacing:0.4px">Motor Vehicle</div>
<div class="cb" style="left:1077px;top:616px"></div>
<div class="t" style="left:1104px;top:616px;letter-spacing:0.5px">Animal</div>

<div class="a" style="left:570px;top:658px;width:1048px;height:1px;background:#e8e8e8"></div>

<!-- time plan -->
<div class="a" style="left:832px;top:684px;width:393px;height:36px;border:1px solid #d9d9d9;border-radius:4px"></div>
<div class="t" style="left:846px;top:694px;color:#444">Full Time</div>
<div class="btn" style="left:1236px;top:684px;width:144px;height:36px;line-height:35px;letter-spacing:0.2px">Add Schedule</div>
<div class="btn" style="left:570px;top:732px;width:155px;height:35px;line-height:33px">+Event Linkage</div>

<div class="a" style="left:570px;top:783px;width:1048px;height:53px;border:1px solid #d9d9d9;border-radius:3px"></div>
<div class="t" style="left:585px;top:802px">Snapshot</div>
<div class="a" style="left:662px;top:805px;width:1px;height:12px;background:#e6e6e6"></div>
<div class="t" style="left:672px;top:802px;color:#8fd18f">Enabled</div>

<div class="btn" style="left:570px;top:847px;width:76px;height:35px;line-height:33px">Back</div>
<div class="a" style="left:657px;top:847px;width:77px;height:35px;border-radius:4px;background:#1890ff;color:#fff;text-align:center;line-height:35px">Next</div>
<div class="btn" style="left:745px;top:847px;width:96px;height:35px;line-height:33px">Refresh</div>
<div class="btn" style="left:852px;top:847px;width:95px;height:35px;line-height:33px">Default</div>

<!-- video overlays -->
<svg class="a" style="left:0;top:0;width:1640px;height:893px" viewBox="0 0 1640 893">
<g font-family="Liberation Sans" fill="#fff" stroke="#000" stroke-width="0.6" paint-order="stroke">
<text x="358.2" y="503" font-size="13.8" textLength="130" lengthAdjust="spacingAndGlyphs">2026-03-10 19:01:59</text>
<text x="49.9" y="734.3" font-size="14.2" textLength="95.4" lengthAdjust="spacingAndGlyphs">V112-CestaVen</text>
</g>
<path d="M41.3,580.8 L336.3,581.6 L340.2,741.6 L38.6,742.4 Z" fill="none" stroke="#f5f500" stroke-width="2.8" stroke-linejoin="miter"/>
<g fill="#f5f500">
<rect x="38.9" y="578.7" width="4.9" height="4.2"/>
<rect x="333.6" y="579" width="5.2" height="5"/>
<rect x="338" y="739.1" width="4.8" height="4.9"/>
<rect x="36" y="737" width="5.5" height="7.5"/>
<rect x="50" y="744" width="6" height="2"/>
<rect x="64" y="744" width="2" height="2"/>
<rect x="74" y="744" width="4" height="2"/>
</g>
</svg>

<svg class="a" style="left:0;top:0;width:1640px;height:893px" viewBox="0 0 1640 893">
<g fill="none" stroke="#1890ff" stroke-width="1.35" stroke-linecap="round" stroke-linejoin="round">
<path d="M20.6,28.8 L25.6,33.4 L33.8,24.7"/>
<path d="M168.4,28.8 L173.4,33.4 L181.6,24.7"/>
<path d="M414.4,28.8 L419.4,33.4 L427.6,24.7"/>
</g>
<g fill="none" stroke="#fff" stroke-width="2.2" stroke-linecap="square">
<path d="M835.3,522 L839,525.8 L845.4,519"/>
<path d="M933.3,625 L937,628.8 L943.4,622"/>
</g>
<path d="M1200.5,698.3 L1205.5,704.3 L1210.8,698.1" fill="none" stroke="#a8a8a8" stroke-width="1.2"/>
<!-- snapshot trash -->
<g>
<rect x="1589.2" y="802.4" width="2.6" height="2" fill="none" stroke="#1a1a1a" stroke-width="1"/>
<rect x="1584.2" y="804" width="12" height="1.2" fill="#1a1a1a"/>
<rect x="1584.8" y="805.2" width="11" height="1" fill="#b0b0b0"/>
<rect x="1585.2" y="807" width="9.6" height="9.3" fill="#1a1a1a"/>
<rect x="1586.9" y="808.8" width="2" height="5.3" fill="#9a9a9a"/>
<rect x="1590" y="808.8" width="1.1" height="5.3" fill="#fff"/>
<rect x="1592" y="808.8" width="1.1" height="5.3" fill="#fff"/>
</g>
<!-- toolbar: polygon -->
<g fill="#1a8cff">
<path d="M523,446 L537.5,446 L537.5,452.5 L530.5,460.4 L523,460.4 Z" fill="none" stroke="#5aabf7" stroke-width="1.6"/>
<rect x="521.2" y="444.2" width="3.9" height="3.7"/>
<rect x="535.8" y="444.2" width="3.2" height="3.5"/>
<rect x="536" y="451.1" width="3" height="2.7"/>
<rect x="521.2" y="458.8" width="3.7" height="3.2"/>
<rect x="528.9" y="458.8" width="3.1" height="3.2"/>
</g>
<!-- grid -->
<g>
<rect x="521.9" y="488.9" width="6.4" height="6.4" rx="0.8" fill="#e8e8e8" stroke="#1f1f1f" stroke-width="1.4"/>
<rect x="531.8" y="498.8" width="6.4" height="6.4" rx="0.8" fill="#e8e8e8" stroke="#1f1f1f" stroke-width="1.4"/>
<rect x="531.1" y="488.2" width="7.7" height="7.7" rx="0.8" fill="#1f1f1f"/>
<rect x="521.2" y="498.1" width="7.7" height="7.7" rx="0.8" fill="#1f1f1f"/>
<path d="M532.5,490.5 L537,494.5 M533,489.5 L537.5,493.5 M532.5,492.5 L535.5,495" stroke="#e0e0e0" stroke-width="0.9"/>
<path d="M522.6,500.4 L527.1,504.4 M523.1,499.4 L527.6,503.4 M522.6,502.4 L525.6,504.9" stroke="#e0e0e0" stroke-width="0.9"/>
</g>
<!-- min -->
<g>
<rect x="525.3" y="530.8" width="10.9" height="11.1" fill="none" stroke="#4a4a4a" stroke-width="1.3"/>
<rect x="523.7" y="529" width="3.2" height="3.6" fill="#1f1f1f"/>
<rect x="534.8" y="529" width="3" height="3.6" fill="#1f1f1f"/>
<rect x="523.7" y="540.1" width="3.2" height="3.5" fill="#1f1f1f"/>
<rect x="534.8" y="540.1" width="3" height="3.5" fill="#1f1f1f"/>
<text x="530.8" y="551.2" font-family="Liberation Sans" font-size="7" font-weight="bold" text-anchor="middle" fill="#1f1f1f" textLength="12.3" lengthAdjust="spacingAndGlyphs">min</text>
</g>
<!-- max -->
<g>
<rect x="520.8" y="569.5" width="18.7" height="16.7" fill="none" stroke="#3a3a3a" stroke-width="1.4"/>
<rect x="519.1" y="568.1" width="3.5" height="2.8" fill="#1f1f1f"/>
<rect x="538.1" y="568.1" width="2.8" height="2.8" fill="#1f1f1f"/>
<rect x="519.1" y="584.4" width="3.5" height="3.3" fill="#1f1f1f"/>
<rect x="538.1" y="584.4" width="2.8" height="3.3" fill="#1f1f1f"/>
<text x="530.1" y="595.8" font-family="Liberation Sans" font-size="6.5" font-weight="bold" text-anchor="middle" fill="#333" textLength="16" lengthAdjust="spacingAndGlyphs">max</text>
</g>
<!-- toolbar trash -->
<g>
<rect x="529.4" y="613.2" width="2.2" height="2" fill="none" stroke="#2a2a2a" stroke-width="0.9"/>
<rect x="524.1" y="615.2" width="12" height="1.5" fill="#6a6a6a"/>
<rect x="525.2" y="617.7" width="9.8" height="9.1" fill="#1f1f1f"/>
<rect x="526.9" y="619.5" width="1.8" height="5.3" fill="#9a9a9a"/>
<rect x="529.6" y="619.5" width="1.1" height="5.3" fill="#e8e8e8"/>
<rect x="531.6" y="619.5" width="1.1" height="5.3" fill="#e8e8e8"/>
</g>
<!-- arrows box -->
<g fill="none" stroke="#1a1a1a">
<rect x="521.1" y="648.2" width="19.5" height="15.5" rx="2.5" stroke-width="2"/>
<path d="M524.4,656.3 L537.6,656.3 M531.6,650.5 L531.6,661.4" stroke-width="1.2"/>
<path d="M527,653.8 L524.4,656.3 L527,658.8 M535,653.8 L537.6,656.3 L535,658.8" stroke-width="1.2"/>
</g>
</svg>
</body></html>
